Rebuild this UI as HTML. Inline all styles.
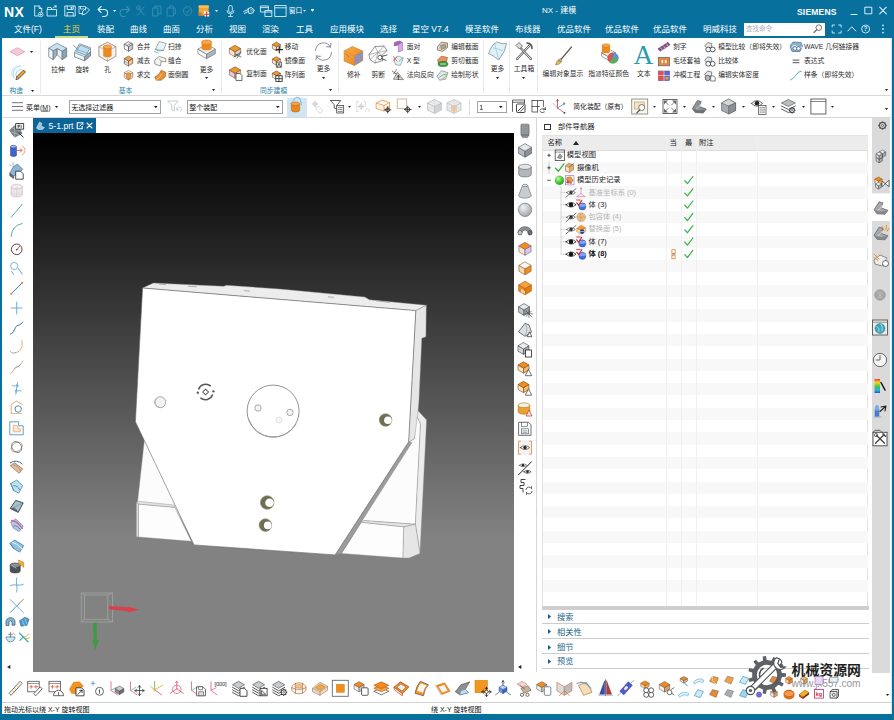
<!DOCTYPE html><html><head><meta charset="utf-8"><title>NX</title><style>
*{margin:0;padding:0;box-sizing:border-box}
html,body{width:894px;height:720px;overflow:hidden;background:#fff}
body{font-family:"Liberation Sans","Noto Sans CJK SC",sans-serif;font-size:8px;color:#222;position:relative}
.a{position:absolute;white-space:nowrap;line-height:1}
.t{position:absolute;white-space:nowrap;line-height:1;transform:translateY(-50%)}
.w{color:#fff}
svg{position:absolute;overflow:visible}
</style></head><body><div class="a" style="left:0px;top:0px;width:894px;height:38px;background:#08709c;"></div>
<div class="a" style="left:0px;top:38px;width:2px;height:682px;background:#08709c;"></div>
<div class="a" style="left:892px;top:38px;width:2px;height:682px;background:#08709c;"></div>
<div class="a" style="left:890.8px;top:38px;width:1.2px;height:676px;background:#cfe6f5;"></div>
<div class="a" style="left:0px;top:714px;width:894px;height:6px;background:#08709c;"></div>
<div class="t" style="left:4px;top:11.5px;font-size:14px;color:#fff;font-weight:bold;letter-spacing:0.5px">NX</div>
<div class="t" style="left:542px;top:11px;font-size:8px;color:#fff;">NX - 建模</div>
<div class="t" style="left:797px;top:11.5px;font-size:8.5px;color:#fff;font-weight:bold;letter-spacing:0.2px">SIEMENS</div>
<div class="t" style="left:14px;top:29px;font-size:8.5px;color:#fff;">文件(F)</div>
<div class="t" style="left:63px;top:29px;font-size:8.5px;color:#f0d24a;">主页</div>
<div class="t" style="left:97px;top:29px;font-size:8.5px;color:#fff;">装配</div>
<div class="t" style="left:130px;top:29px;font-size:8.5px;color:#fff;">曲线</div>
<div class="t" style="left:163px;top:29px;font-size:8.5px;color:#fff;">曲面</div>
<div class="t" style="left:196px;top:29px;font-size:8.5px;color:#fff;">分析</div>
<div class="t" style="left:229px;top:29px;font-size:8.5px;color:#fff;">视图</div>
<div class="t" style="left:262px;top:29px;font-size:8.5px;color:#fff;">渲染</div>
<div class="t" style="left:296px;top:29px;font-size:8.5px;color:#fff;">工具</div>
<div class="t" style="left:330px;top:29px;font-size:8.5px;color:#fff;">应用模块</div>
<div class="t" style="left:380px;top:29px;font-size:8.5px;color:#fff;">选择</div>
<div class="t" style="left:412px;top:29px;font-size:8.5px;color:#fff;">星空 V7.4</div>
<div class="t" style="left:465px;top:29px;font-size:8.5px;color:#fff;">模圣软件</div>
<div class="t" style="left:515px;top:29px;font-size:8.5px;color:#fff;">布线器</div>
<div class="t" style="left:557px;top:29px;font-size:8.5px;color:#fff;">优品软件</div>
<div class="t" style="left:605px;top:29px;font-size:8.5px;color:#fff;">优品软件</div>
<div class="t" style="left:653px;top:29px;font-size:8.5px;color:#fff;">优品软件</div>
<div class="t" style="left:703px;top:29px;font-size:8.5px;color:#fff;">明威科技</div>
<div class="a" style="left:55px;top:36px;width:33px;height:2px;background:#c9d98a;"></div>
<div class="a" style="left:743.5px;top:22.5px;width:81px;height:13px;background:#fff;"></div>
<div class="t" style="left:746px;top:29px;font-size:6.5px;color:#aab;">查找命令</div>
<div class="a" style="left:2px;top:38px;width:888.5px;height:57.5px;background:#fff;"></div>
<div class="a" style="left:2px;top:95px;width:888.5px;height:1px;background:#d8d8d8;"></div>
<div class="a" style="left:2px;top:96px;width:888.5px;height:21px;background:#fff;"></div>
<div class="a" style="left:2px;top:117px;width:888.5px;height:1px;background:#d8d8d8;"></div>
<div class="t" style="left:9.4px;top:91px;font-size:6.8px;color:#2a7fa3;">构造</div>
<svg width="3.2" height="1.92" viewBox="0 0 10 6" style="left:31.4px;top:89.54px"><path d="M0 0H10L5 6Z" fill="#222"/></svg>
<svg width="3.2" height="1.92" viewBox="0 0 10 6" style="left:29.9px;top:50.54px"><path d="M0 0H10L5 6Z" fill="#222"/></svg>
<div class="a" style="left:40px;top:41px;width:1px;height:52px;background:#e9e9e9;"></div>
<div class="t" style="left:58px;top:69.6px;font-size:6.8px;color:#2b2b2b;transform:translate(-50%,-50%)">拉伸</div>
<div class="t" style="left:82.3px;top:69.6px;font-size:6.8px;color:#2b2b2b;transform:translate(-50%,-50%)">旋转</div>
<div class="t" style="left:107.6px;top:69.6px;font-size:6.8px;color:#2b2b2b;transform:translate(-50%,-50%)">孔</div>
<div class="t" style="left:136.8px;top:47.2px;font-size:6.8px;color:#2b2b2b;">合并</div>
<div class="t" style="left:168px;top:47.2px;font-size:6.8px;color:#2b2b2b;">扫掠</div>
<div class="t" style="left:136.8px;top:61.4px;font-size:6.8px;color:#2b2b2b;">减去</div>
<div class="t" style="left:168px;top:61.4px;font-size:6.8px;color:#2b2b2b;">缝合</div>
<div class="t" style="left:136.8px;top:75px;font-size:6.8px;color:#2b2b2b;">求交</div>
<div class="t" style="left:168px;top:75px;font-size:6.8px;color:#2b2b2b;">面倒圆</div>
<div class="t" style="left:206.6px;top:69.5px;font-size:6.8px;color:#2b2b2b;transform:translate(-50%,-50%)">更多</div>
<svg width="3.2" height="1.92" viewBox="0 0 10 6" style="left:205.0px;top:77.04px"><path d="M0 0H10L5 6Z" fill="#222"/></svg>
<div class="t" style="left:118.7px;top:90.7px;font-size:6.8px;color:#2a7fa3;">基本</div>
<svg width="3.2" height="1.92" viewBox="0 0 10 6" style="left:212.4px;top:89.34px"><path d="M0 0H10L5 6Z" fill="#222"/></svg>
<div class="a" style="left:220.5px;top:41px;width:1px;height:52px;background:#e9e9e9;"></div>
<div class="t" style="left:246.3px;top:52px;font-size:6.8px;color:#2b2b2b;">优化面</div>
<div class="t" style="left:246.3px;top:73.9px;font-size:6.8px;color:#2b2b2b;">复制面</div>
<div class="t" style="left:284.7px;top:47.2px;font-size:6.8px;color:#2b2b2b;">移动</div>
<div class="t" style="left:284.7px;top:61.4px;font-size:6.8px;color:#2b2b2b;">镜像面</div>
<div class="t" style="left:284.7px;top:75px;font-size:6.8px;color:#2b2b2b;">阵列面</div>
<div class="t" style="left:323.5px;top:68.8px;font-size:6.8px;color:#2b2b2b;transform:translate(-50%,-50%)">更多</div>
<svg width="3.2" height="1.92" viewBox="0 0 10 6" style="left:321.9px;top:76.84px"><path d="M0 0H10L5 6Z" fill="#222"/></svg>
<div class="t" style="left:260px;top:90.7px;font-size:6.8px;color:#2a7fa3;">同步建模</div>
<svg width="3.2" height="1.92" viewBox="0 0 10 6" style="left:328.7px;top:89.34px"><path d="M0 0H10L5 6Z" fill="#222"/></svg>
<div class="a" style="left:337.5px;top:41px;width:1px;height:52px;background:#e9e9e9;"></div>
<div class="t" style="left:353.8px;top:74.6px;font-size:6.8px;color:#2b2b2b;transform:translate(-50%,-50%)">修补</div>
<div class="t" style="left:378.2px;top:74.6px;font-size:6.8px;color:#2b2b2b;transform:translate(-50%,-50%)">剪断</div>
<div class="t" style="left:406.7px;top:47.2px;font-size:6.8px;color:#2b2b2b;">面对</div>
<div class="t" style="left:451.3px;top:47.2px;font-size:6.8px;color:#2b2b2b;">编辑截面</div>
<div class="t" style="left:406.7px;top:61.4px;font-size:6.8px;color:#2b2b2b;">X 型</div>
<div class="t" style="left:451.3px;top:61.4px;font-size:6.8px;color:#2b2b2b;">剪切截面</div>
<div class="t" style="left:406.7px;top:75px;font-size:6.8px;color:#2b2b2b;">法向反向</div>
<div class="t" style="left:451.3px;top:75px;font-size:6.8px;color:#2b2b2b;">绘制形状</div>
<div class="a" style="left:482.5px;top:41px;width:1px;height:52px;background:#e9e9e9;"></div>
<div class="t" style="left:497.6px;top:68.8px;font-size:6.8px;color:#2b2b2b;transform:translate(-50%,-50%)">更多</div>
<svg width="3.2" height="1.92" viewBox="0 0 10 6" style="left:496.0px;top:76.84px"><path d="M0 0H10L5 6Z" fill="#222"/></svg>
<div class="a" style="left:509px;top:41px;width:1px;height:52px;background:#e9e9e9;"></div>
<div class="t" style="left:524px;top:68.8px;font-size:6.8px;color:#2b2b2b;transform:translate(-50%,-50%)">工具箱</div>
<svg width="3.2" height="1.92" viewBox="0 0 10 6" style="left:522.4px;top:76.84px"><path d="M0 0H10L5 6Z" fill="#222"/></svg>
<div class="a" style="left:537px;top:41px;width:1px;height:52px;background:#e9e9e9;"></div>
<div class="t" style="left:563px;top:74px;font-size:6.8px;color:#2b2b2b;transform:translate(-50%,-50%)">编辑对象显示</div>
<div class="t" style="left:608.6px;top:74px;font-size:6.8px;color:#2b2b2b;transform:translate(-50%,-50%)">指派特征颜色</div>
<div class="t" style="left:643.8px;top:74px;font-size:6.8px;color:#2b2b2b;transform:translate(-50%,-50%)">文本</div>
<div class="t" style="left:673px;top:47.2px;font-size:6.8px;color:#2b2b2b;">刻字</div>
<div class="t" style="left:718.2px;top:47.2px;font-size:6.8px;color:#2b2b2b;">模型比较（即将失效）</div>
<div class="t" style="left:804px;top:47.2px;font-size:6.8px;color:#2b2b2b;">WAVE 几何链接器</div>
<div class="t" style="left:673px;top:61.4px;font-size:6.8px;color:#2b2b2b;">毛坯套袖</div>
<div class="t" style="left:718.2px;top:61.4px;font-size:6.8px;color:#2b2b2b;">比较体</div>
<div class="t" style="left:804px;top:61.4px;font-size:6.8px;color:#2b2b2b;">表达式</div>
<div class="t" style="left:673px;top:75.4px;font-size:6.8px;color:#2b2b2b;">冲模工程</div>
<div class="t" style="left:718.2px;top:75.4px;font-size:6.8px;color:#2b2b2b;">编辑实体密度</div>
<div class="t" style="left:804px;top:75.4px;font-size:6.8px;color:#2b2b2b;">样条（即将失效）</div>
<svg width="3.2" height="1.92" viewBox="0 0 10 6" style="left:885.4px;top:89.34px"><path d="M0 0H10L5 6Z" fill="#222"/></svg>
<svg width="3.2" height="1.92" viewBox="0 0 10 6" style="left:885.4px;top:107.54px"><path d="M0 0H10L5 6Z" fill="#222"/></svg>
<div class="t" style="left:643.5px;top:54.5px;font-size:27.5px;color:#2a9bb0;font-family:'Liberation Serif',serif;transform:translate(-50%,-50%)">A</div>
<svg width="11" height="9" viewBox="0 0 11 9" style="left:11.5px;top:102px"><path d="M0 0.7H11M0 4.5H11M0 8.3H11" stroke="#666" stroke-width="0.9" fill="none"/></svg>
<div class="t" style="left:26px;top:106.6px;font-size:7px;color:#222;">菜单(<u>M</u>)</div>
<svg width="3.2" height="1.92" viewBox="0 0 10 6" style="left:54.9px;top:105.84px"><path d="M0 0H10L5 6Z" fill="#222"/></svg>
<div class="a" style="left:68.8px;top:100.2px;width:92.5px;height:13.6px;background:#fff;border:1px solid #9ea3a8"></div>
<div class="t" style="left:71.3px;top:107.2px;font-size:7px;color:#111;">无选择过滤器</div>
<svg width="3.6" height="2.16" viewBox="0 0 10 6" style="left:153.5px;top:106.22px"><path d="M0 0H10L5 6Z" fill="#222"/></svg>
<div class="a" style="left:186.8px;top:100.2px;width:96.5px;height:13.6px;background:#fff;border:1px solid #9ea3a8"></div>
<div class="t" style="left:189.3px;top:107.2px;font-size:7px;color:#111;">整个装配</div>
<svg width="3.6" height="2.16" viewBox="0 0 10 6" style="left:275.5px;top:106.22px"><path d="M0 0H10L5 6Z" fill="#222"/></svg>
<div class="a" style="left:476.8px;top:100.6px;width:30px;height:12.8px;background:#fff;border:1px solid #9ea3a8"></div>
<div class="t" style="left:479.3px;top:107.2px;font-size:7px;color:#111;">1</div>
<svg width="3.6" height="2.16" viewBox="0 0 10 6" style="left:499.0px;top:106.22px"><path d="M0 0H10L5 6Z" fill="#222"/></svg>
<div class="a" style="left:287.2px;top:97.6px;width:19.4px;height:19px;background:#cfe6f5;"></div>
<div class="t" style="left:573.3px;top:106.8px;font-size:6.8px;color:#222;">简化装配（原有）</div>
<div class="a" style="left:468.5px;top:99px;width:1px;height:16px;background:#ddd;"></div>
<svg width="3" height="1.7999999999999998" viewBox="0 0 10 6" style="left:347.5px;top:106.1px"><path d="M0 0H10L5 6Z" fill="#222"/></svg>
<svg width="3" height="1.7999999999999998" viewBox="0 0 10 6" style="left:417.7px;top:106.1px"><path d="M0 0H10L5 6Z" fill="#222"/></svg>
<svg width="3" height="1.7999999999999998" viewBox="0 0 10 6" style="left:652.8px;top:106.1px"><path d="M0 0H10L5 6Z" fill="#222"/></svg>
<svg width="3" height="1.7999999999999998" viewBox="0 0 10 6" style="left:683.4px;top:106.1px"><path d="M0 0H10L5 6Z" fill="#222"/></svg>
<svg width="3" height="1.7999999999999998" viewBox="0 0 10 6" style="left:711.9px;top:106.1px"><path d="M0 0H10L5 6Z" fill="#222"/></svg>
<svg width="3" height="1.7999999999999998" viewBox="0 0 10 6" style="left:742.0px;top:106.1px"><path d="M0 0H10L5 6Z" fill="#222"/></svg>
<svg width="3" height="1.7999999999999998" viewBox="0 0 10 6" style="left:771.5px;top:106.1px"><path d="M0 0H10L5 6Z" fill="#222"/></svg>
<svg width="3" height="1.7999999999999998" viewBox="0 0 10 6" style="left:801.5px;top:106.1px"><path d="M0 0H10L5 6Z" fill="#222"/></svg>
<svg width="3" height="1.7999999999999998" viewBox="0 0 10 6" style="left:830.5px;top:106.1px"><path d="M0 0H10L5 6Z" fill="#222"/></svg>
<div class="a" style="left:33px;top:133px;width:481px;height:538.6px;background:linear-gradient(#000 0%,#000 1%,#828282 75%,#828282 100%);"></div>
<svg width="894" height="720" viewBox="0 0 894 720" style="left:0;top:0"><polygon points="144.4,440 137.5,503 174.2,506.5 186.8,530 160,470" fill="#fcfcfc" stroke="#999" stroke-width="0.4" stroke-linejoin="round" /><polygon points="136.3,502.5 139,501.3 174,505 175,507.5 138.5,504.2" fill="#e2e2e2" stroke="#888" stroke-width="0.4" stroke-linejoin="round" /><polygon points="136.3,502.5 138.5,504.2 138.5,537 136.3,536.8" fill="#dcdcdc" stroke="#888" stroke-width="0.4" stroke-linejoin="round" /><polygon points="138.5,504.2 175,507.5 191.3,541.3 138.5,537" fill="#fdfdfd" stroke="#888" stroke-width="0.4" stroke-linejoin="round" /><polygon points="408.6,441.9 414.5,438.8 416,414 420.5,424 415.4,524.2 364,520.6 350,540" fill="#fcfcfc" stroke="#999" stroke-width="0.4" stroke-linejoin="round" /><polygon points="416,414 418.1,410.8 426.6,419.9 420,553.4 415.4,524.2 420.5,424" fill="#ececec" stroke="#888" stroke-width="0.4" stroke-linejoin="round" /><polygon points="361.3,522.4 364,520.6 415.4,524.2 403.7,526.9" fill="#e4e4e4" stroke="#888" stroke-width="0.4" stroke-linejoin="round" /><polygon points="403.7,526.9 415.4,524.2 420,553.4 409.1,558.1 402.8,558.1" fill="#e6e6e6" stroke="#888" stroke-width="0.4" stroke-linejoin="round" /><polygon points="361.3,522.4 403.7,526.9 402.8,558.1 341.4,553.4" fill="#fdfdfd" stroke="#888" stroke-width="0.4" stroke-linejoin="round" /><polygon points="142.6,288 153.4,283 223.8,286.3 226.5,285.3 280,289 364.9,297.1 369.4,299.8 426.3,305.2 415.8,310.6" fill="#ededed" stroke="#888" stroke-width="0.4" stroke-linejoin="round" /><polygon points="415.8,310.6 426.3,305.2 425.9,336.8 421.8,338.3 419,400 418.1,410.8 414.5,438.8 408.6,441.9" fill="#e6e6e6" stroke="#888" stroke-width="0.4" stroke-linejoin="round" /><polygon points="408.6,441.9 412,442.5 341.4,553.4 335.1,554.9" fill="#9c9c9c" stroke="#777" stroke-width="0.3" stroke-linejoin="round" /><path d="M159 284.2 L166 284.6 M188 286.2 L197 286.8 M244 290.6 L250 291.1 M328 296.8 L334 297.4 M376 300.8 L390 302.4" stroke="#a8a8a8" stroke-width="0.9" fill="none"/><polygon points="142.6,288 415.8,310.6 408.6,441.9 335.1,554.9 194,544.9 135.4,421.7" fill="#ffffff" stroke="#666" stroke-width="0.6" stroke-linejoin="round" /><circle cx="273.1" cy="411.1" r="26" fill="#fff" stroke="#666" stroke-width="0.7"/><path d="M249 420 A26 26 0 0 0 296 424" fill="none" stroke="#999" stroke-width="1"/><circle cx="258" cy="408" r="3.2" fill="#f4f4f4" stroke="#777" stroke-width="0.6"/><circle cx="290" cy="412.4" r="3.2" fill="#f4f4f4" stroke="#777" stroke-width="0.6"/><circle cx="278.9" cy="420" r="3" fill="#f6f6f6" stroke="#ccc" stroke-width="0.5"/><circle cx="160.2" cy="402.2" r="5.5" fill="#f2f2f2" stroke="#777" stroke-width="0.6"/><path d="M157.2 398.2 A5 5 0 0 0 159.2 407.2" fill="none" stroke="#aaa" stroke-width="0.8"/><circle cx="385.6" cy="420" r="6.3" fill="#6e6e55" stroke="#8a8a6a" stroke-width="0.6"/><circle cx="387.90000000000003" cy="420.3" r="3.8" fill="#fff"/><circle cx="267.2" cy="502.5" r="6.8" fill="#6e6e55" stroke="#8a8a6a" stroke-width="0.6"/><circle cx="269.5" cy="502.8" r="4.3" fill="#fff"/><circle cx="265.4" cy="525.1" r="6.3" fill="#6e6e55" stroke="#8a8a6a" stroke-width="0.6"/><circle cx="267.7" cy="525.4" r="3.8" fill="#fff"/><g transform="translate(205.6,392) scale(1.3)" fill="none" stroke="#555" stroke-width="1.1"><path d="M-5.5 -2 A6 6 0 0 1 4 -4.5"/><path d="M5.5 2 A6 6 0 0 1 -4 4.5"/><path d="M-2.2 0 L0 -2.2 L2.2 0 L0 2.2 Z" stroke-width="0.8"/><circle cx="-6" cy="0.5" r="0.9" fill="#555" stroke="none"/><circle cx="6" cy="-0.5" r="0.9" fill="#555" stroke="none"/></g><g fill="none" stroke="#aeb4b0" stroke-width="0.7" opacity="0.85"><path d="M81.3 593 H112.6 V622 H81.3 Z"/><path d="M84.4 595 H107.8 V619.4 H84.4 Z"/><path d="M81.3 593 L84.4 595 M112.6 593 L107.8 595 M112.6 622 L107.8 619.4 M81.3 622 L84.4 619.4"/></g><path d="M108.9 606.1 L128 607.2 L128 606.4 L139.4 609.8 L128 612.4 L128 611.2 L108.9 609.3 Z" fill="#d8404e"/><path d="M92.9 622.8 L96.7 622.8 L97 640 L99 639.5 L95.3 650 L92.3 640 L93.8 640.3 Z" fill="#3f9a48"/></svg>
<div class="a" style="left:32.7px;top:118px;width:63.3px;height:15.2px;background:#0c6398;"></div>
<div class="t" style="left:48.6px;top:125.6px;font-size:8.6px;color:#fff;">5-1.prt</div>
<div class="a" style="left:535.6px;top:118px;width:1px;height:554px;background:#d6d6d6;"></div>
<div class="a" style="left:543.8px;top:123.8px;width:6.8px;height:6.6px;border:1px solid #333"></div>
<div class="t" style="left:558px;top:127.2px;font-size:7.3px;color:#222;">部件导航器</div>
<div class="a" style="left:542.4px;top:135.4px;width:326px;height:470.6px;background:#fff;border:1px solid #e3e3e3;border-bottom:none"></div>
<div class="a" style="left:543px;top:161.8px;width:325px;height:12.3px;background:#f8f8f8;"></div>
<div class="a" style="left:543px;top:186.4px;width:325px;height:12.3px;background:#f8f8f8;"></div>
<div class="a" style="left:543px;top:211.0px;width:325px;height:12.3px;background:#f8f8f8;"></div>
<div class="a" style="left:543px;top:235.60000000000002px;width:325px;height:12.3px;background:#f8f8f8;"></div>
<div class="a" style="left:543px;top:260.2px;width:325px;height:12.3px;background:#f8f8f8;"></div>
<div class="a" style="left:543px;top:284.8px;width:325px;height:12.3px;background:#f8f8f8;"></div>
<div class="a" style="left:543px;top:309.4px;width:325px;height:12.3px;background:#f8f8f8;"></div>
<div class="a" style="left:543px;top:334.0px;width:325px;height:12.3px;background:#f8f8f8;"></div>
<div class="a" style="left:543px;top:358.6px;width:325px;height:12.3px;background:#f8f8f8;"></div>
<div class="a" style="left:543px;top:383.20000000000005px;width:325px;height:12.3px;background:#f8f8f8;"></div>
<div class="a" style="left:543px;top:407.8px;width:325px;height:12.3px;background:#f8f8f8;"></div>
<div class="a" style="left:543px;top:432.40000000000003px;width:325px;height:12.3px;background:#f8f8f8;"></div>
<div class="a" style="left:543px;top:457.0px;width:325px;height:12.3px;background:#f8f8f8;"></div>
<div class="a" style="left:543px;top:481.6px;width:325px;height:12.3px;background:#f8f8f8;"></div>
<div class="a" style="left:543px;top:506.20000000000005px;width:325px;height:12.3px;background:#f8f8f8;"></div>
<div class="a" style="left:543px;top:530.8px;width:325px;height:12.3px;background:#f8f8f8;"></div>
<div class="a" style="left:543px;top:555.4000000000001px;width:325px;height:12.3px;background:#f8f8f8;"></div>
<div class="a" style="left:543px;top:580.0px;width:325px;height:12.3px;background:#f8f8f8;"></div>
<div class="a" style="left:543px;top:136px;width:325px;height:13.5px;background:#ececec;"></div>
<div class="a" style="left:543px;top:149.5px;width:325px;height:0.8px;background:#dedede;"></div>
<div class="a" style="left:665.6px;top:136px;width:0.8px;height:470px;background:#f0f0f0;"></div>
<div class="a" style="left:681.2px;top:136px;width:0.8px;height:470px;background:#f0f0f0;"></div>
<div class="a" style="left:695.7px;top:136px;width:0.8px;height:470px;background:#f0f0f0;"></div>
<div class="a" style="left:757.2px;top:136px;width:0.8px;height:470px;background:#f0f0f0;"></div>
<div class="t" style="left:547.4px;top:142.9px;font-size:7.3px;color:#222;">名称</div>
<svg width="6" height="4" viewBox="0 0 6 4" style="left:572.8px;top:141px"><path d="M0 4H6L3 0Z" fill="#222"/></svg>
<div class="t" style="left:669.5px;top:142.9px;font-size:7.3px;color:#222;">当</div>
<div class="t" style="left:685px;top:142.9px;font-size:7.3px;color:#222;">最</div>
<div class="t" style="left:699px;top:142.9px;font-size:7.3px;color:#222;">附注</div>
<div class="a" style="left:542.4px;top:606px;width:326.3px;height:3.6px;background:#cfcfcf;"></div>
<div class="t" style="left:566.8px;top:155.3px;font-size:7.3px;color:#222;">模型视图</div>
<div class="t" style="left:576.9px;top:167.8px;font-size:7.3px;color:#222;">摄像机</div>
<div class="t" style="left:576.9px;top:180.3px;font-size:7.3px;color:#222;">模型历史记录</div>
<div class="t" style="left:588.5px;top:192.6px;font-size:7.3px;color:#b4b4b4;">基准坐标系 (0)</div>
<div class="t" style="left:588.5px;top:204.8px;font-size:7.3px;color:#222;">体 (3)</div>
<div class="t" style="left:588.5px;top:217.2px;font-size:7.3px;color:#b4b4b4;">包容体 (4)</div>
<div class="t" style="left:588.5px;top:229.4px;font-size:7.3px;color:#b4b4b4;">替换面 (5)</div>
<div class="t" style="left:588.5px;top:241.8px;font-size:7.3px;color:#222;">体 (7)</div>
<div class="t" style="left:588.5px;top:254.2px;font-size:7.3px;color:#111;font-weight:bold">体 (8)</div>
<div class="t" style="left:557.1px;top:617.8000000000001px;font-size:8.2px;color:#1d6688;">搜索</div>
<svg width="3.2" height="5" viewBox="0 0 4 6" style="left:547.6px;top:614.3000000000001px"><path d="M0 0V6L4 3Z" fill="#1d5f80"/></svg>
<div class="t" style="left:557.1px;top:632.9000000000001px;font-size:8.2px;color:#1d6688;">相关性</div>
<svg width="3.2" height="5" viewBox="0 0 4 6" style="left:547.6px;top:629.4000000000001px"><path d="M0 0V6L4 3Z" fill="#1d5f80"/></svg>
<div class="t" style="left:557.1px;top:648.0px;font-size:8.2px;color:#1d6688;">细节</div>
<svg width="3.2" height="5" viewBox="0 0 4 6" style="left:547.6px;top:644.5px"><path d="M0 0V6L4 3Z" fill="#1d5f80"/></svg>
<div class="t" style="left:557.1px;top:662.1px;font-size:8.2px;color:#1d6688;">预览</div>
<svg width="3.2" height="5" viewBox="0 0 4 6" style="left:547.6px;top:658.6px"><path d="M0 0V6L4 3Z" fill="#1d5f80"/></svg>
<div class="a" style="left:542.4px;top:623.2px;width:326.3px;height:0.9px;background:#cdcdcd;"></div>
<div class="a" style="left:542.4px;top:638.3px;width:326.3px;height:0.9px;background:#cdcdcd;"></div>
<div class="a" style="left:542.4px;top:653px;width:326.3px;height:0.9px;background:#cdcdcd;"></div>
<div class="a" style="left:542.4px;top:667.9px;width:326.3px;height:0.9px;background:#cdcdcd;"></div>
<div class="a" style="left:872px;top:117.5px;width:18.4px;height:555px;background:#dadada;"></div>
<div class="a" style="left:2px;top:702px;width:888.5px;height:1px;background:#d0d0d0;"></div>
<div class="t" style="left:4px;top:708.5px;font-size:7px;color:#111;">拖动光标以绕 X-Y 旋转视图</div>
<div class="t" style="left:431px;top:708.5px;font-size:7px;color:#111;">绕 X-Y 旋转视图</div>
<svg width="3.2" height="1.92" viewBox="0 0 10 6" style="left:112.9px;top:10.04px"><path d="M0 0H10L5 6Z" fill="#e8f4fa"/></svg>
<svg width="3.2" height="1.92" viewBox="0 0 10 6" style="left:214.6px;top:10.04px"><path d="M0 0H10L5 6Z" fill="#e8f4fa"/></svg>
<div class="t" style="left:288.7px;top:11.3px;font-size:6.8px;color:#fff;">窗口</div>
<svg width="3" height="1.7999999999999998" viewBox="0 0 10 6" style="left:303.3px;top:10.1px"><path d="M0 0H10L5 6Z" fill="#e8f4fa"/></svg>
<svg width="3" height="1.7999999999999998" viewBox="0 0 10 6" style="left:311.0px;top:10.4px"><path d="M0 0H10L5 6Z" fill="#e8f4fa"/></svg>
<div class="a" style="left:311px;top:9px;width:3px;height:0.8px;background:#e8f4fa;"></div>
<svg width="4" height="4" viewBox="0 0 6 6" style="left:6.5px;top:665px"><path d="M5 0V6L0 3Z" fill="#222"/></svg>
<svg width="4" height="4" viewBox="0 0 6 6" style="left:518.2px;top:665px"><path d="M5 0V6L0 3Z" fill="#222"/></svg>
<svg width="3.2" height="1.92" viewBox="0 0 10 6" style="left:885.9px;top:694.3399999999999px"><path d="M0 0H10L5 6Z" fill="#222"/></svg>
<div class="t" style="left:791.5px;top:671.3px;font-size:13.9px;color:#1e1e1e;font-weight:bold;font-family:"Liberation Sans","Noto Sans CJK SC",sans-serif;letter-spacing:-0.1px">机械资源网</div>
<div class="t" style="left:791.5px;top:684px;font-size:10.2px;color:rgba(120,120,125,0.8);letter-spacing:-0.15px">www.jx557.com</div>
<svg width="894" height="720" viewBox="0 0 894 720" style="left:0;top:0"><g transform="translate(38.2,11)" ><path d="M-3.5 -5 H1 L3.5 -2.5 V1 M-3.5 -5 V5 H0 M1 -5 V-2.5 H3.5" fill="none" stroke="#d8eef8" stroke-width="0.9" stroke-linecap="round" stroke-linejoin="round" /><circle cx="2.5" cy="3.5" r="2.3" fill="none" stroke="#d8eef8" stroke-width="0.8"/><path d="M2.5 2.3V4.7M1.3 3.5H3.7" fill="none" stroke="#d8eef8" stroke-width="0.7" stroke-linecap="round" stroke-linejoin="round" /></g><g transform="translate(52,11.5)" ><path d="M-4.5 -2 H4.5 V4.5 H-4.5 Z M-4.5 -2 V-4 H-1 L0 -2" fill="none" stroke="#d8eef8" stroke-width="0.9" stroke-linecap="round" stroke-linejoin="round" /><path d="M1 -3.5 L4 -5.5 M4 -5.5 H2.2 M4 -5.5 V-3.8" fill="none" stroke="#d8eef8" stroke-width="0.8" stroke-linecap="round" stroke-linejoin="round" /></g><g transform="translate(70.2,11)" ><path d="M-5 -5 H5 V5 H-5 Z M-3 -5 V-1.5 H3 V-5 M-3 5 V1.5 H3 V5" fill="none" stroke="#d8eef8" stroke-width="0.9" stroke-linecap="round" stroke-linejoin="round" /><rect x="0.5" y="-4.2" width="1.5" height="2" rx="0" fill="#d8eef8" stroke="none" stroke-width="0.6"/></g><g transform="translate(84,11)" ><path d="M-5 -4.5 H1.5 V-1 M-5 -4.5 V2.5 H-1.5 M-3.5 -4.5 V-2 H0" fill="none" stroke="#d8eef8" stroke-width="0.8" stroke-linecap="round" stroke-linejoin="round" /><path d="M-1 0 L3 -3.5 L5.5 -1 L1.5 3 L-1.5 3.8 Z" fill="none" stroke="#d8eef8" stroke-width="0.9" stroke-linecap="round" stroke-linejoin="round" /></g><g transform="translate(102.6,11)" ><path d="M-4.5 -1.5 H1.5 A3.5 3.5 0 0 1 1.5 5.5 H0 M-4.5 -1.5 L-1.5 -4.5 M-4.5 -1.5 L-1.5 1.5" fill="none" stroke="#d8eef8" stroke-width="1.1" stroke-linecap="round" stroke-linejoin="round" /></g><g transform="translate(125,11)" ><path d="M4.5 -1.5 H-1.5 A3.5 3.5 0 0 0 -1.5 5.5 H0 M4.5 -1.5 L1.5 -4.5 M4.5 -1.5 L1.5 1.5" fill="none" stroke="#3a8fb4" stroke-width="1.1" stroke-linecap="round" stroke-linejoin="round" /></g><g transform="translate(141,11)" ><path d="M-3 -4 L3 4 M3 -4 L-3 4 M-4 -2 A2 2 0 1 1 -3.9 -1.9" fill="none" stroke="#3a8fb4" stroke-width="0.9" stroke-linecap="round" stroke-linejoin="round" /></g><g transform="translate(157,11)" ><path d="M-4 -3 H1 V5 H-4 Z M-2 -3 V-5 H4 V3 H1" fill="none" stroke="#3a8fb4" stroke-width="0.9" stroke-linecap="round" stroke-linejoin="round" /></g><g transform="translate(171.5,11)" ><path d="M-4 -3 H2 V5 H-4 Z M-2 -3 V-5 H1 L4 -2 V3 H2" fill="none" stroke="#3a8fb4" stroke-width="0.9" stroke-linecap="round" stroke-linejoin="round" /></g><g transform="translate(187.6,11)" ><circle cx="0" cy="0" r="4.3" fill="none" stroke="#3a8fb4" stroke-width="0.9"/><path d="M-2 0.5 L-0.3 2 L2.2 -1.8" fill="none" stroke="#3a8fb4" stroke-width="0.9" stroke-linecap="round" stroke-linejoin="round" /></g><g transform="translate(203.7,11)" ><rect x="-5" y="-5.5" width="10" height="10" rx="0" fill="#f3a73a" stroke="none" stroke-width="0.6"/><rect x="-5" y="-5.5" width="10" height="2.2" rx="0" fill="#f7c35e" stroke="none" stroke-width="0.6"/><polygon points="0,0 5.5,1 5.5,5.5 1,5.5" fill="#fff" stroke="none" stroke-width="0.6" stroke-linejoin="round"/><path d="M3 1 V5.5 M1 3.2 H5.5" fill="none" stroke="#c8343c" stroke-width="1.1" stroke-linecap="round" stroke-linejoin="round" /><rect x="-5" y="1.5" width="3" height="3" rx="0" fill="#e2742a" stroke="none" stroke-width="0.6"/></g><g transform="translate(230.5,11)" ><rect x="-1.8" y="-5.5" width="3.6" height="7" rx="1.8" fill="none" stroke="#d8eef8" stroke-width="0.9"/><path d="M-3.5 -0.5 A3.5 3.5 0 0 0 3.5 -0.5 M0 3 V5.3 M-2 5.5 H2" fill="none" stroke="#d8eef8" stroke-width="0.8" stroke-linecap="round" stroke-linejoin="round" /></g><g transform="translate(249.3,11)" ><path d="M-5.5 0.5 L-1 -1.5 M-1 -2.5 L2 -3.5 L5 -1 L3.5 2 L0 2.5 Z M-5 2.5 L-1 0.5" fill="none" stroke="#d8eef8" stroke-width="1.0" stroke-linecap="round" stroke-linejoin="round" /><circle cx="2.3" cy="-0.6" r="1" fill="none" stroke="#d8eef8" stroke-width="0.6"/></g><g transform="translate(266.3,11)" ><path d="M-5.5 -5 H2 V1 H-5.5 Z M-5.5 -3.4 H2" fill="none" stroke="#d8eef8" stroke-width="0.9" stroke-linecap="round" stroke-linejoin="round" /><path d="M-1 -0.5 H5.5 V5.5 H-1 Z M-1 1 H5.5" fill="#08709c" stroke="#d8eef8" stroke-width="0.9" stroke-linecap="round" stroke-linejoin="round" /></g><g transform="translate(280.6,11)" ><path d="M-5.5 -5.5 H5.5 V5.5 H-5.5 Z M-5.5 -3.2 H5.5" fill="none" stroke="#d8eef8" stroke-width="0.9" stroke-linecap="round" stroke-linejoin="round" /></g><g transform="translate(854,11)" ><path d="M-3 3.5 H3" fill="none" stroke="#d8eef8" stroke-width="1.1" stroke-linecap="round" stroke-linejoin="round" /></g><g transform="translate(868.5,10.5)" ><path d="M-3.3 -3.3 H3.3 V3.3 H-3.3 Z" fill="none" stroke="#d8eef8" stroke-width="1.0" stroke-linecap="round" stroke-linejoin="round" /></g><g transform="translate(883,10.5)" ><path d="M-3.3 -3.3 L3.3 3.3 M3.3 -3.3 L-3.3 3.3" fill="none" stroke="#d8eef8" stroke-width="1.1" stroke-linecap="round" stroke-linejoin="round" /></g><g transform="translate(818,28.5)" ><circle cx="0.8" cy="-0.8" r="2.8" fill="none" stroke="#666" stroke-width="0.9"/><path d="M-1.2 1.2 L-4 4" fill="none" stroke="#666" stroke-width="1.1" stroke-linecap="round" stroke-linejoin="round" /></g><g transform="translate(836.7,29)" ><path d="M-4.5 -2 V-4 H-2 M2 -4 H4.5 V-2 M4.5 2 V4 H2 M-2 4 H-4.5 V2" fill="none" stroke="#d8eef8" stroke-width="0.9" stroke-linecap="round" stroke-linejoin="round" /></g><g transform="translate(851.8,29)" ><path d="M-4 2 L0 -2.2 L4 2" fill="none" stroke="#d8eef8" stroke-width="1.0" stroke-linecap="round" stroke-linejoin="round" /></g><g transform="translate(865.6,29)" ><circle cx="0" cy="0" r="4" fill="none" stroke="#d8eef8" stroke-width="0.9"/><text x="0" y="2.4" font-size="6.5" font-weight="bold" text-anchor="middle" fill="#d8eef8" font-family="Liberation Sans,sans-serif">?</text></g><g transform="translate(883,29)" ><circle cx="0" cy="-3.6" r="0.9" fill="#d8eef8" stroke="none" stroke-width="0.6"/><circle cx="0" cy="0" r="0.9" fill="#d8eef8" stroke="none" stroke-width="0.6"/><circle cx="0" cy="3.6" r="0.9" fill="#d8eef8" stroke="none" stroke-width="0.6"/></g><g transform="translate(17.4,51.7)" ><polygon points="-7.4,0 0,-4 7.4,0 0,4" fill="#f6c9da" stroke="#d993b0" stroke-width="0.7" stroke-linejoin="round"/></g><g transform="translate(18,73)" ><path d="M-4 5 A8 8 0 0 1 3 -7" fill="none" stroke="#8cc4e6" stroke-width="0.8" stroke-linecap="round" stroke-linejoin="round" /><path d="M-1.5 4 A5 5 0 0 1 3.5 -3.5" fill="none" stroke="#8cc4e6" stroke-width="0.8" stroke-linecap="round" stroke-linejoin="round" /><path d="M-6.5 3 A10 10 0 0 1 -1 -8" fill="none" stroke="#b8dcf0" stroke-width="0.7" stroke-linecap="round" stroke-linejoin="round" /><polygon points="-2,6.5 -1,3.5 5.5,-3 7.5,-1 1,5.5" fill="#f0a033" stroke="#3a2a18" stroke-width="0.7" stroke-linejoin="round"/><polygon points="-2,6.5 -1,3.5 1,5.5" fill="#f6deb5" stroke="#3a2a18" stroke-width="0.5" stroke-linejoin="round"/></g><g transform="translate(57.7,51.7)" ><polygon points="-9,-3.5 -4.5,-1 -4.5,8 -9,5" fill="#eef3f5" stroke="#4b6472" stroke-width="0.6" stroke-linejoin="round"/><polygon points="-4.5,-1 -0.5,-3.2 -0.5,3 -4.5,8" fill="#9fb1ba" stroke="#4b6472" stroke-width="0.6" stroke-linejoin="round"/><polygon points="-0.5,-3.2 4.5,-0.5 4.5,8 -0.5,3" fill="#e8eef1" stroke="#4b6472" stroke-width="0.6" stroke-linejoin="round"/><polygon points="4.5,-0.5 9,-3.5 9,5 4.5,8" fill="#8fa4ae" stroke="#4b6472" stroke-width="0.6" stroke-linejoin="round"/><polygon points="-9,-3.5 -1,-8.5 9,-3.5 4.5,-0.5 -0.5,-3.2 -4.5,-1" fill="#c9e2ee" stroke="#4b6472" stroke-width="0.6" stroke-linejoin="round"/></g><g transform="translate(82.5,51.7)" ><polygon points="-8,1 -3,-8 8,-4 8,4 2,9 -8,5" fill="#dfe8ec" stroke="#4b6472" stroke-width="0.6" stroke-linejoin="round"/><polygon points="-6,0 -2.5,-6.5 7,-3 3.5,3.5" fill="#bfe0f0" stroke="#4b6472" stroke-width="0.5" stroke-linejoin="round"/><polygon points="-8,1 2,5 2,9 -8,5" fill="#f3f6f7" stroke="#4b6472" stroke-width="0.5" stroke-linejoin="round"/><polygon points="2,5 8,0 8,4 2,9" fill="#95a8b2" stroke="#4b6472" stroke-width="0.5" stroke-linejoin="round"/><path d="M-5 -2 L5 1.5" fill="none" stroke="#5fa8d0" stroke-width="0.7" stroke-linecap="round" stroke-linejoin="round" /><path d="M-9 -6.5 L-5.5 -3" fill="none" stroke="#4b6472" stroke-width="0.7" stroke-linecap="round" stroke-linejoin="round" /></g><g transform="translate(107.4,51.7)" ><polygon points="-8.5,-5 0,-9.5 8.5,-5 8.5,4.5 0,9.5 -8.5,4.5" fill="#f6f3ef" stroke="#6b5a48" stroke-width="0.6" stroke-linejoin="round"/><path d="M-8.5 -5 L0 -0.5 L8.5 -5 M0 -0.5 V9.5" fill="none" stroke="#9a8a78" stroke-width="0.5" stroke-linecap="round" stroke-linejoin="round" /><path d="M-4.2 -4.8 V3.5 A4.2 2 0 0 0 4.2 3.5 V-4.8Z" fill="#e98a22"/><ellipse cx="0" cy="-4.8" rx="4.2" ry="2" fill="#f7a94a" stroke="#c76a10" stroke-width="0.5" /></g><g transform="translate(128.5,46.5) scale(1.15)" ><polygon points="-3.65,-2.1 0,0.0 0,4.2 -3.65,2.1" fill="#fbfbfb" stroke="#4a4a4a" stroke-width="0.55" stroke-linejoin="round"/><polygon points="0,0.0 3.65,-2.1 3.65,2.1 0,4.2" fill="#c7cdd1" stroke="#4a4a4a" stroke-width="0.55" stroke-linejoin="round"/><polygon points="0,-4.2 3.65,-2.1 0,0.0 -3.65,-2.1" fill="#eef1f3" stroke="#4a4a4a" stroke-width="0.55" stroke-linejoin="round"/><path d="M-1 -1 L2.5 -3" fill="none" stroke="#4a4a4a" stroke-width="0.5" stroke-linecap="round" stroke-linejoin="round" /></g><g transform="translate(128.5,61) scale(1.15)" ><polygon points="-3.65,-2.1 0,0.0 0,4.2 -3.65,2.1" fill="#fff" stroke="#5a4a3a" stroke-width="0.55" stroke-linejoin="round"/><polygon points="0,0.0 3.65,-2.1 3.65,2.1 0,4.2" fill="#f6c48c" stroke="#5a4a3a" stroke-width="0.55" stroke-linejoin="round"/><polygon points="0,-4.2 3.65,-2.1 0,0.0 -3.65,-2.1" fill="#f3a34a" stroke="#5a4a3a" stroke-width="0.55" stroke-linejoin="round"/><polygon points="-3.6,0 0,2 0,4.6 -3.6,2.4" fill="#d7dde0" stroke="#5a4a3a" stroke-width="0.4" stroke-linejoin="round"/></g><g transform="translate(128.5,75.2) scale(1.15)" ><polygon points="-3.65,-2.1 0,0.0 0,4.2 -3.65,2.1" fill="#fff" stroke="#7a6a5a" stroke-width="0.55" stroke-linejoin="round"/><polygon points="0,0.0 3.65,-2.1 3.65,2.1 0,4.2" fill="#f0f0f0" stroke="#7a6a5a" stroke-width="0.55" stroke-linejoin="round"/><polygon points="0,-4.2 3.65,-2.1 0,0.0 -3.65,-2.1" fill="#fff" stroke="#7a6a5a" stroke-width="0.55" stroke-linejoin="round"/><ellipse cx="0" cy="0.5" rx="2.2" ry="2.8" fill="#f19a3c" stroke="#b8651a" stroke-width="0.5" /></g><g transform="translate(160.3,46.5)" ><polygon points="-5,3 -1,-5 6,-3 3,4" fill="#eaf3f8" stroke="#5b7c8c" stroke-width="0.6" stroke-linejoin="round"/><path d="M-5 3 Q-1 6 3 4" fill="none" stroke="#5b7c8c" stroke-width="0.6" stroke-linecap="round" stroke-linejoin="round" /><path d="M-6 5 L-2 6.5" fill="none" stroke="#58b0d8" stroke-width="0.8" stroke-linecap="round" stroke-linejoin="round" /></g><g transform="translate(160.3,61)" ><polygon points="-5.5,-1 -1,-4.5 5.5,-2.5 5.5,1 1,0 0,5 -5.5,3" fill="#f3f3f1" stroke="#5a5a55" stroke-width="0.6" stroke-linejoin="round"/><path d="M-1 -1.5 L1 0" fill="none" stroke="#5a5a55" stroke-width="0.5" stroke-linecap="round" stroke-linejoin="round" /></g><g transform="translate(160.3,75.2)" ><polygon points="-5.5,2 -1.5,-1 1,-5 5.5,-3 5,1.5 1,5 -4,5" fill="#ef922c" stroke="#7a4210" stroke-width="0.5" stroke-linejoin="round"/><path d="M-4 5 Q0 3 1 -1" fill="none" stroke="#fbd19a" stroke-width="0.8" stroke-linecap="round" stroke-linejoin="round" /></g><g transform="translate(206.6,51.4)" ><polygon points="-8.7,-2.25 0,2.75 0,7.25 -8.7,2.25" fill="#fafafa" stroke="#5a646b" stroke-width="0.6" stroke-linejoin="round"/><polygon points="0,2.75 8.7,-2.25 8.7,2.25 0,7.25" fill="#aeb6bb" stroke="#5a646b" stroke-width="0.6" stroke-linejoin="round"/><polygon points="0,-7.25 8.7,-2.25 0,2.75 -8.7,-2.25" fill="#eceff1" stroke="#5a646b" stroke-width="0.6" stroke-linejoin="round"/><path d="M-5 -9 V-3.5 A5 2.4 0 0 0 5 -3.5 V-9Z" fill="#ee8a20"/><ellipse cx="0" cy="-9" rx="5" ry="2.4" fill="#f6a546" stroke="#c76a10" stroke-width="0.5" /></g><g transform="translate(235,51)" ><polygon points="-5.66,-2.5 0,0.75 0,5.75 -5.66,2.5" fill="#fbe9d2" stroke="#6a4a2a" stroke-width="0.55" stroke-linejoin="round"/><polygon points="0,0.75 5.66,-2.5 5.66,2.5 0,5.75" fill="#d8d2cc" stroke="#6a4a2a" stroke-width="0.55" stroke-linejoin="round"/><polygon points="0,-5.75 5.66,-2.5 0,0.75 -5.66,-2.5" fill="#f19628" stroke="#6a4a2a" stroke-width="0.55" stroke-linejoin="round"/><path d="M-1 6 L6 1 M2 7 L5 3 M0 3 L6 6" fill="none" stroke="#444" stroke-width="0.7" stroke-linecap="round" stroke-linejoin="round" /></g><g transform="translate(235,72.5)" ><polygon points="-5.66,-2.5 0,0.75 0,5.75 -5.66,2.5" fill="#e8c9e0" stroke="#6a4a2a" stroke-width="0.55" stroke-linejoin="round"/><polygon points="0,0.75 5.66,-2.5 5.66,2.5 0,5.75" fill="#d8d2cc" stroke="#6a4a2a" stroke-width="0.55" stroke-linejoin="round"/><polygon points="0,-5.75 5.66,-2.5 0,0.75 -5.66,-2.5" fill="#f19628" stroke="#6a4a2a" stroke-width="0.55" stroke-linejoin="round"/><polygon points="1,1 5,1 7,3 7,8 1,8" fill="#fff" stroke="#333" stroke-width="0.7" stroke-linejoin="round"/></g><g transform="translate(276.4,46.5) scale(1.15)" ><polygon points="-3.48,-1.7 0,0.3 0,3.7 -3.48,1.7" fill="#fbe9d2" stroke="#6a4a2a" stroke-width="0.5" stroke-linejoin="round"/><polygon points="0,0.3 3.48,-1.7 3.48,1.7 0,3.7" fill="#e5dcd2" stroke="#6a4a2a" stroke-width="0.5" stroke-linejoin="round"/><polygon points="0,-3.7 3.48,-1.7 0,0.3 -3.48,-1.7" fill="#f19628" stroke="#6a4a2a" stroke-width="0.5" stroke-linejoin="round"/><path d="M2.5 0 V5.5 M-0.3 2.7 H5.3" fill="none" stroke="#222" stroke-width="1.0" stroke-linecap="round" stroke-linejoin="round" /></g><g transform="translate(276.4,61) scale(1.15)" ><polygon points="-3.48,-1.7 0,0.3 0,3.7 -3.48,1.7" fill="#fbe9d2" stroke="#6a4a2a" stroke-width="0.5" stroke-linejoin="round"/><polygon points="0,0.3 3.48,-1.7 3.48,1.7 0,3.7" fill="#e5dcd2" stroke="#6a4a2a" stroke-width="0.5" stroke-linejoin="round"/><polygon points="0,-3.7 3.48,-1.7 0,0.3 -3.48,-1.7" fill="#f19628" stroke="#6a4a2a" stroke-width="0.5" stroke-linejoin="round"/><polygon points="0,1 4.5,1 4.5,5.5 0,5.5" fill="#ddd" stroke="#333" stroke-width="0.6" stroke-linejoin="round"/><path d="M1 5 L2.3 2 L3.6 5" fill="none" stroke="#333" stroke-width="0.6" stroke-linecap="round" stroke-linejoin="round" /></g><g transform="translate(276.4,75.2) scale(1.15)" ><polygon points="-3.48,-1.7 0,0.3 0,3.7 -3.48,1.7" fill="#fbe9d2" stroke="#6a4a2a" stroke-width="0.5" stroke-linejoin="round"/><polygon points="0,0.3 3.48,-1.7 3.48,1.7 0,3.7" fill="#e5dcd2" stroke="#6a4a2a" stroke-width="0.5" stroke-linejoin="round"/><polygon points="0,-3.7 3.48,-1.7 0,0.3 -3.48,-1.7" fill="#f19628" stroke="#6a4a2a" stroke-width="0.5" stroke-linejoin="round"/><rect x="-0.5" y="0.5" width="5.5" height="5" rx="0" fill="#fff" stroke="#222" stroke-width="0.7"/><path d="M2.2 0.5 V5.5 M-0.5 3 H5" fill="none" stroke="#222" stroke-width="0.7" stroke-linecap="round" stroke-linejoin="round" /></g><g transform="translate(323.5,51.5)" ><path d="M-8 -1 A8 8 0 0 1 7 -4.5 M7 -4.5 L7.5 -8.5 M7 -4.5 L3 -4.8" fill="none" stroke="#8a8f94" stroke-width="1.0" stroke-linecap="round" stroke-linejoin="round" /><path d="M8 1 A8 8 0 0 1 -7 4.5 M-7 4.5 L-7.5 8.5 M-7 4.5 L-3 4.8" fill="none" stroke="#8a8f94" stroke-width="1.0" stroke-linecap="round" stroke-linejoin="round" /></g><g transform="translate(353.4,56)" ><defs><linearGradient id="pg1" x1="0" y1="0" x2="1" y2="1"><stop offset="0" stop-color="#f7b04e"/><stop offset="1" stop-color="#ec7f12"/></linearGradient></defs><polygon points="-9.3,-5 -1,-9.5 9.3,-5 9.3,4.5 1,9.5 -9.3,5" fill="url(#pg1)" stroke="#c9761a" stroke-width="0.6" stroke-linejoin="round"/><polygon points="1,0 9.3,-5 9.3,4.5 1,9.5" fill="#9092b4" stroke="none" stroke-width="0.6" stroke-linejoin="round"/><path d="M-9.3 -5 L1 0 L9.3 -5 M1 0 V9.5" fill="none" stroke="#d98a3a" stroke-width="0.5" stroke-linecap="round" stroke-linejoin="round" /><path d="M-7.5 -2 L-4.5 1" fill="none" stroke="#e2463c" stroke-width="0.8" stroke-linecap="round" stroke-linejoin="round" /></g><g transform="translate(378,54.5)" ><polygon points="-9,0 -3,-8 6,-8.5 9,-4 4,1 5,6 -3,8.5 -8,5" fill="#fbfbfb" stroke="#4a4a4a" stroke-width="0.6" stroke-linejoin="round"/><path d="M-9 0 L0 -2 L6 -8.5 M0 -2 L-3 8.5 M-3 -8 L0 -2 L9 -4 M-8 5 L0 -2 L4 1" fill="none" stroke="#6a6a6a" stroke-width="0.45" stroke-linecap="round" stroke-linejoin="round" /><circle cx="2" cy="3" r="2.2" fill="#fff" stroke="#333" stroke-width="0.7"/><path d="M3.5 2 L9 0.5 M3.5 4 L8 6" fill="none" stroke="#333" stroke-width="0.8" stroke-linecap="round" stroke-linejoin="round" /></g><g transform="translate(398.4,46.5)" ><polygon points="-4,-4 1,-5.5 4,-4 4,4 0,5.5 0,-1.5 -4,-0.5" fill="#a565b8" stroke="#6a3a80" stroke-width="0.5" stroke-linejoin="round"/><polygon points="0,-1.5 4,-4 4,4 0,5.5" fill="#d9a9e4" stroke="none" stroke-width="0.6" stroke-linejoin="round"/></g><g transform="translate(398.4,61)" ><polygon points="-4.5,-2 0,-5 5,-3 2,4.5 -3,3.5" fill="#e3eef2" stroke="#6b8a98" stroke-width="0.6" stroke-linejoin="round"/><path d="M-5 -4.5 L-1.5 0 M-1.5 -4.5 L-5 0" fill="none" stroke="#e0564a" stroke-width="0.8" stroke-linecap="round" stroke-linejoin="round" /><path d="M1 0 L4.5 -3.5" fill="none" stroke="#6b8a98" stroke-width="0.7" stroke-linecap="round" stroke-linejoin="round" /></g><g transform="translate(398.4,75.2)" ><polygon points="-5,4 -1,-3 5,4.5" fill="#d8d4cf" stroke="#555" stroke-width="0.6" stroke-linejoin="round"/><path d="M-6 -4 L-2 -1 M-2 -5.5 L-4.5 -1.5" fill="none" stroke="#444" stroke-width="0.7" stroke-linecap="round" stroke-linejoin="round" /><path d="M0 4.5 V0.5 M0 0.5 L-1.3 2 M0 0.5 L1.3 2" fill="none" stroke="#222" stroke-width="0.7" stroke-linecap="round" stroke-linejoin="round" /></g><g transform="translate(442.5,46.5)" ><polygon points="-5,0 -1,-4.5 5,-3.5 5,1 0,5 -5,3.5" fill="#d9cfc2" stroke="#5a5048" stroke-width="0.6" stroke-linejoin="round"/><polygon points="-2,-1 3,-2.5 3.5,1 -1,3" fill="#9aa4aa" stroke="#5a5048" stroke-width="0.4" stroke-linejoin="round"/><path d="M-2 4 L4 -3" fill="none" stroke="#e8a040" stroke-width="1.0" stroke-linecap="round" stroke-linejoin="round" /></g><g transform="translate(442.5,61)" ><polygon points="-5,-1 -1,-5 5,-3.5 4,1 -4,2" fill="#e8935a" stroke="#7a4a2a" stroke-width="0.5" stroke-linejoin="round"/><ellipse cx="0.5" cy="3" rx="5" ry="2.6" fill="#3a9a3e" stroke="#1e6a24" stroke-width="0.5" /><path d="M-2 3 H3" fill="none" stroke="#fff" stroke-width="0.8" stroke-linecap="round" stroke-linejoin="round" /></g><g transform="translate(442.5,75.2)" ><polygon points="-5.5,1 -1,-4.5 5.5,-2.5 3,4 -3,5" fill="#dfeaf0" stroke="#5b7c8c" stroke-width="0.6" stroke-linejoin="round"/><path d="M-3 2 Q1 -2 4 -1" fill="none" stroke="#6ab04a" stroke-width="0.8" stroke-linecap="round" stroke-linejoin="round" /><path d="M-1 5 L4 0" fill="none" stroke="#e8a040" stroke-width="1.0" stroke-linecap="round" stroke-linejoin="round" /></g><g transform="translate(497.6,51.5)" ><path d="M-9 2 Q-6 -7 -1 -9.5 Q5 -7 9 -8 Q8 0 1 8.5 Q-4 4 -9 2Z" fill="#dff0f7" stroke="#5b7480" stroke-width="0.6"/><path d="M-4 -3.5 Q2 -2 5 -1 M-3 -8 Q-1 0 1 8" fill="none" stroke="#8cc0d8" stroke-width="0.6" stroke-linecap="round" stroke-linejoin="round" /></g><g transform="translate(524,51.5)" ><path d="M-7 7.5 L5.5 -6" fill="none" stroke="#555" stroke-width="2.2" stroke-linecap="round" stroke-linejoin="round" /><path d="M-7 7.5 L5.5 -6" fill="none" stroke="#f4f4f4" stroke-width="1.0" stroke-linecap="round" stroke-linejoin="round" /><path d="M3 -8.5 Q8 -8 8 -3" fill="none" stroke="#555" stroke-width="1.6" stroke-linecap="round" stroke-linejoin="round" /><path d="M7 7.5 L-3 -3" fill="none" stroke="#555" stroke-width="2.2" stroke-linecap="round" stroke-linejoin="round" /><path d="M7 7.5 L-3 -3" fill="none" stroke="#f4f4f4" stroke-width="1.0" stroke-linecap="round" stroke-linejoin="round" /><polygon points="-8,-6 -5,-9 -1.5,-5.5 -4.5,-2.5" fill="#ddd" stroke="#444" stroke-width="0.7" stroke-linejoin="round"/></g><g transform="translate(562.5,56)" ><path d="M9 -9 L-2 4" fill="none" stroke="#6a5a4a" stroke-width="1.2" stroke-linecap="round" stroke-linejoin="round" /><polygon points="-2,2.5 -0.5,4.5 -3,8 -7,9 -5.5,5" fill="#e8b84a" stroke="#8a6a2a" stroke-width="0.5" stroke-linejoin="round"/><path d="M-4 4 L-1.5 6" fill="none" stroke="#7a8fb0" stroke-width="1.2" stroke-linecap="round" stroke-linejoin="round" /></g><g transform="translate(608.5,54.5)" ><polygon points="-6.96,-1.75 0,2.25 0,5.75 -6.96,1.75" fill="#fafafa" stroke="#59636a" stroke-width="0.6" stroke-linejoin="round"/><polygon points="0,2.25 6.96,-1.75 6.96,1.75 0,5.75" fill="#b4bcc2" stroke="#59636a" stroke-width="0.6" stroke-linejoin="round"/><polygon points="0,-5.75 6.96,-1.75 0,2.25 -6.96,-1.75" fill="#f2f2f2" stroke="#59636a" stroke-width="0.6" stroke-linejoin="round"/><path d="M-6.5 -9 V-3 A4 1.8 0 0 0 1.5 -3 V-9Z" fill="#ee8a20"/><ellipse cx="-2.5" cy="-9" rx="4" ry="1.8" fill="#f6a546" stroke="#c76a10" stroke-width="0.4" /><circle cx="4.5" cy="3.5" r="5.3" fill="#e8504a" stroke="#7a3a3a" stroke-width="0.4"/><path d="M4.5 3.5 L4.5 -1.8 A5.3 5.3 0 0 1 9.6 5 Z" fill="#4a9ae0"/><path d="M4.5 3.5 L9.6 5 A5.3 5.3 0 0 1 1 7.5 Z" fill="#4ab85a"/></g><g transform="translate(664,46.8)" ><polygon points="-6,2 4,-4.5 6,-2 -4,4.5" fill="#8a4ab0" stroke="#4a2a6a" stroke-width="0.5" stroke-linejoin="round"/><path d="M-3.5 1 L-2 3 M-0.5 -0.8 L1 1.2 M2.5 -2.8 L4 -0.8" fill="none" stroke="#f3d34a" stroke-width="0.8" stroke-linecap="round" stroke-linejoin="round" /></g><g transform="translate(664,61.3)" ><rect x="-5.5" y="-4" width="11" height="8.5" rx="0" fill="#e88a3a" stroke="#5a5a6a" stroke-width="0.7"/><rect x="-3" y="-2" width="6" height="4.5" rx="0" fill="#fde9b8" stroke="#b86a2a" stroke-width="0.5"/><path d="M0 -1.5 V2" fill="none" stroke="#c03a2a" stroke-width="0.9" stroke-linecap="round" stroke-linejoin="round" /></g><g transform="translate(664,75.5)" ><rect x="-5.5" y="-4.5" width="11" height="9.5" rx="0" fill="#5a6ad0" stroke="#3a3a8a" stroke-width="0.5"/><rect x="-5.5" y="-4.5" width="5.5" height="9.5" rx="0" fill="#e2504a" stroke="none" stroke-width="0.6"/><path d="M-5.5 0 H5.5 M0 -4.5 V5" fill="none" stroke="#f4f4f4" stroke-width="0.6" stroke-linecap="round" stroke-linejoin="round" /><rect x="1.5" y="1.5" width="3" height="2.5" rx="0" fill="#f0a030" stroke="none" stroke-width="0.6"/></g><g transform="translate(709.7,47)" ><polygon points="-5,-1 -2,-4.5 2,-3.5 2,0 -2,2" fill="#e4e4e4" stroke="#444" stroke-width="0.6" stroke-linejoin="round"/><circle cx="-1.5" cy="2.5" r="2.4" fill="#fff" stroke="#333" stroke-width="0.8"/><circle cx="3" cy="2.5" r="2.4" fill="#fff" stroke="#333" stroke-width="0.8"/></g><g transform="translate(709.7,61.3)" ><polygon points="-5,-1 -2,-4.5 2,-3.5 2,0 -2,2" fill="#e4e4e4" stroke="#444" stroke-width="0.6" stroke-linejoin="round"/><circle cx="-1.5" cy="2.5" r="2.4" fill="#fff" stroke="#333" stroke-width="0.8"/><circle cx="3" cy="2.5" r="2.4" fill="#fff" stroke="#333" stroke-width="0.8"/></g><g transform="translate(709.7,75.5)" ><polygon points="-5,-1 -2,-4.5 2,-3.5 2,0 -2,2" fill="#e4e4e4" stroke="#444" stroke-width="0.6" stroke-linejoin="round"/><circle cx="-2" cy="2.5" r="2.6" fill="#bbb" stroke="#333" stroke-width="0.7"/><polygon points="1,0.5 4,0.5 5.5,2 5.5,5.5 1,5.5" fill="#fff" stroke="#333" stroke-width="0.6" stroke-linejoin="round"/></g><g transform="translate(796,47)" ><polygon points="-6,-1 -3,-5 5,-4.5 6.5,-1 4,4.5 -4,4.5" fill="#8ab4d4" stroke="#3a5a7a" stroke-width="0.6" stroke-linejoin="round"/><path d="M-4 0 Q-1 -3 1 0 T6 0" fill="none" stroke="#e8f2fa" stroke-width="1.0" stroke-linecap="round" stroke-linejoin="round" /><circle cx="-1" cy="1.5" r="1.8" fill="#fff" stroke="#3a5a7a" stroke-width="0.6"/><circle cx="2.5" cy="1.5" r="1.8" fill="#fff" stroke="#3a5a7a" stroke-width="0.6"/></g><g transform="translate(796,61.3)" ><path d="M-3 -1.2 H3 M-3 1.4 H3" fill="none" stroke="#555" stroke-width="1.0" stroke-linecap="round" stroke-linejoin="round" /></g><g transform="translate(796,75.5)" ><path d="M-5.5 4.5 Q-2 3 0 -0.5 T5.5 -4.5" fill="none" stroke="#4aa0c8" stroke-width="0.9" stroke-linecap="round" stroke-linejoin="round" /></g><g transform="translate(174,106)" ><path d="M-6 -5 H4 L0.3 -0.5 V5 L-2.3 3.5 V-0.5 Z" fill="none" stroke="#b9bdc1" stroke-width="0.8" stroke-linecap="round" stroke-linejoin="round" /><path d="M3 4 A2.4 2.4 0 1 1 6.5 5.5 M3 4 L2.5 2 M3 4 L5 3.7" fill="none" stroke="#c9cdd0" stroke-width="0.8" stroke-linecap="round" stroke-linejoin="round" /></g><g transform="translate(295.5,107)" ><path d="M-4.2 -3.25 V3.25 A4.2 1.8 0 0 0 4.2 3.25 V-3.25" fill="#ea8620" stroke="#b0600e" stroke-width="0.5"/><ellipse cx="0" cy="-3.25" rx="4.2" ry="1.8" fill="#f6a546" stroke="#b0600e" stroke-width="0.5" /><path d="M-2 -6 A3.5 3.5 0 0 1 5 -6.5 L6 -2" fill="none" stroke="#8ab4cc" stroke-width="1.0" stroke-linecap="round" stroke-linejoin="round" /><path d="M-5.5 -3 L-1 -7.5" fill="none" stroke="#9fc4d8" stroke-width="0.9" stroke-linecap="round" stroke-linejoin="round" /></g><g transform="translate(317,106.5)" ><circle cx="-2" cy="-2.5" r="1.8599999999999999" fill="none" stroke="#c4c8cc" stroke-width="0.8"/><path d="M-5 -2.5 H1 M-2 -5.5 V0.5" fill="none" stroke="#c4c8cc" stroke-width="0.8" stroke-linecap="round" stroke-linejoin="round" /><path d="M-1 3 A2.3 2.3 0 0 1 3.5 1.5 L5.5 3.5 A2.3 2.3 0 0 1 2 6 Z" fill="none" stroke="#cfd3d6" stroke-width="0.8" stroke-linecap="round" stroke-linejoin="round" /></g><g transform="translate(337.2,106.5)" ><path d="M-6.5 -6 H3.5 L0 -1.5 V3 L-3 1.5 V-1.5 Z" fill="none" stroke="#333" stroke-width="0.8" stroke-linecap="round" stroke-linejoin="round" /><rect x="-0.5" y="-1" width="7" height="7.5" rx="0" fill="#f2f2f2" stroke="#333" stroke-width="0.7"/><path d="M1 1 H2 M3 1 H5 M1 3 H2 M3 3 H5 M1 5 H2 M3 5 H5" fill="none" stroke="#444" stroke-width="0.6" stroke-linecap="round" stroke-linejoin="round" /></g><g transform="translate(363.4,106.5)" ><path d="M-6.5 -5 V5 M-6.5 -5 H-5 M-6.5 5 H-5 M0.5 -5 H2 V0" fill="none" stroke="#cfd3d6" stroke-width="0.8" stroke-linecap="round" stroke-linejoin="round" /><circle cx="-2.2" cy="0" r="1.8599999999999999" fill="none" stroke="#c4c8cc" stroke-width="0.8"/><path d="M-5.2 0 H0.7999999999999998 M-2.2 -3 V3" fill="none" stroke="#c4c8cc" stroke-width="0.8" stroke-linecap="round" stroke-linejoin="round" /><path d="M2 4.5 A2 2 0 1 1 5.5 5.5" fill="none" stroke="#cfd3d6" stroke-width="0.8" stroke-linecap="round" stroke-linejoin="round" /></g><g transform="translate(383.5,106)" ><path d="M-7 -3 L-1.5 -6 L6 -3.5 L6 2 L0.5 5 L-7 2.5 Z M-7 -3 L0.5 -0.5 L6 -3.5 M0.5 -0.5 V5" fill="#fdf3e6" stroke="#e8964a" stroke-width="0.8" stroke-linecap="round" stroke-linejoin="round" /><circle cx="4.2" cy="3.8" r="1.984" fill="none" stroke="#222" stroke-width="0.8"/><path d="M1.0 3.8 H7.4 M4.2 0.5999999999999996 V7.0" fill="none" stroke="#222" stroke-width="0.8" stroke-linecap="round" stroke-linejoin="round" /></g><g transform="translate(403.7,106)" ><rect x="-6.5" y="-7" width="9.5" height="9.5" rx="0" fill="#fff" stroke="#c8a684" stroke-width="0.8"/><circle cx="4" cy="3.5" r="2.108" fill="none" stroke="#222" stroke-width="0.8"/><path d="M0.6000000000000001 3.5 H7.4 M4 0.10000000000000009 V6.9" fill="none" stroke="#222" stroke-width="0.8" stroke-linecap="round" stroke-linejoin="round" /></g><g transform="translate(434.5,106.5)" ><polygon points="-7,-3.5 0,-7 7,-3.5 7,3.5 0,7 -7,3.5" fill="#e9eaeb" stroke="#a9adb0" stroke-width="0.6" stroke-linejoin="round"/><polygon points="0,0 7,-3.5 7,3.5 0,7" fill="#d0d2d4" stroke="none" stroke-width="0.6" stroke-linejoin="round"/><path d="M-7 -3.5 L0 0 L7 -3.5 M0 0 V7" fill="none" stroke="#b3b7ba" stroke-width="0.6" stroke-linecap="round" stroke-linejoin="round" /><path d="M0 -7 V-0.5 M-7 3.5 L0 -0.5 L7 3.5" fill="none" stroke="#cfd2d4" stroke-width="0.5" stroke-linecap="round" stroke-linejoin="round" /></g><g transform="translate(454,106.5)" ><polygon points="-7,-3.5 0,-7 7,-3.5 7,3.5 0,7 -7,3.5" fill="#e9eaeb" stroke="#a9adb0" stroke-width="0.6" stroke-linejoin="round"/><polygon points="-3,-1 3,-1 3,5 -3,5" fill="#f2c9a4" stroke="none" stroke-width="0.6" stroke-linejoin="round"/><path d="M-7 -3.5 L0 0 L7 -3.5 M0 0 V7" fill="none" stroke="#b3b7ba" stroke-width="0.6" stroke-linecap="round" stroke-linejoin="round" /><path d="M0 -7 V-0.5 M-7 3.5 L0 -0.5 L7 3.5" fill="none" stroke="#cfd2d4" stroke-width="0.5" stroke-linecap="round" stroke-linejoin="round" /></g><g transform="translate(519,106.5)" ><path d="M-6.5 5 V-6.5 H5.5 M-6.5 -4.3 H5.5 M5.5 -6.5 V-3" fill="none" stroke="#444" stroke-width="0.8" stroke-linecap="round" stroke-linejoin="round" /><rect x="-2.5" y="-2.5" width="8.5" height="8.5" rx="1" fill="#fff" stroke="#333" stroke-width="0.9"/><path d="M-1 4.5 L4.5 -1 M1.5 4.8 L5 1.3" fill="none" stroke="#333" stroke-width="0.9" stroke-linecap="round" stroke-linejoin="round" /></g><g transform="translate(538.5,106.5)" ><path d="M-6.5 -6 H5 V0 M-6.5 -6 V5.5 H-1 M-1 -6 V5.5 M-6.5 0 H1" fill="none" stroke="#444" stroke-width="0.8" stroke-linecap="round" stroke-linejoin="round" /><path d="M1.5 3.5 Q5 0.5 7 3 M7 3 L6.8 0.8 M7 3 L4.8 3.2 M6 5.5 Q3 7.5 1.5 5" fill="none" stroke="#444" stroke-width="0.8" stroke-linecap="round" stroke-linejoin="round" /></g><g transform="translate(559,106.5)" ><path d="M-1.5 1.5 V-7" fill="none" stroke="#d0304a" stroke-width="0.8" stroke-linecap="round" stroke-linejoin="round" /><path d="M-1.5 1.5 L5.5 -3" fill="none" stroke="#2aa0a0" stroke-width="0.8" stroke-linecap="round" stroke-linejoin="round" /><path d="M-1.5 1.5 L5 6" fill="none" stroke="#d0304a" stroke-width="0.7" stroke-linecap="round" stroke-linejoin="round" /><path d="M-1.5 1.5 L-6 -3" fill="none" stroke="#e07080" stroke-width="0.6" stroke-linecap="round" stroke-linejoin="round" /><circle cx="5.5" cy="6.3" r="0.9" fill="#333" stroke="none" stroke-width="0.6"/><path d="M-2.5 -5.5 L-1.5 -7 L-0.5 -5.5" fill="none" stroke="#333" stroke-width="0.6" stroke-linecap="round" stroke-linejoin="round" /><path d="M4.2 -3.6 L5.8 -3.2 L5 -1.8" fill="none" stroke="#333" stroke-width="0.6" stroke-linecap="round" stroke-linejoin="round" /></g><g transform="translate(639.7,106.5)" ><rect x="-8" y="-7.5" width="16" height="15" rx="0" fill="#fbf6ea" stroke="#8a8a86" stroke-width="0.9"/><rect x="-5.5" y="-4.5" width="10" height="7" rx="0" fill="#f3e4c8" stroke="#9a8a6a" stroke-width="0.5"/><circle cx="2" cy="1" r="3" fill="#fff" stroke="#555" stroke-width="0.8"/><path d="M0 3.5 L-3 6.5" fill="none" stroke="#555" stroke-width="1.1" stroke-linecap="round" stroke-linejoin="round" /></g><g transform="translate(670,106.5)" ><rect x="-7" y="-7" width="14" height="14" rx="0" fill="#fff" stroke="#555" stroke-width="0.9"/><polygon points="-6,-6 -2,-6 -6,-2" fill="#666" stroke="none" stroke-width="0.6" stroke-linejoin="round"/><polygon points="6,-6 2,-6 6,-2" fill="#666" stroke="none" stroke-width="0.6" stroke-linejoin="round"/><polygon points="-6,6 -2,6 -6,2" fill="#666" stroke="none" stroke-width="0.6" stroke-linejoin="round"/><polygon points="6,6 2,6 6,2" fill="#666" stroke="none" stroke-width="0.6" stroke-linejoin="round"/><path d="M-5 -5 L-1.5 -1.5 M5 -5 L1.5 -1.5 M-5 5 L-1.5 1.5 M5 5 L1.5 1.5" fill="none" stroke="#666" stroke-width="0.8" stroke-linecap="round" stroke-linejoin="round" /></g><g transform="translate(699.3,106.5)" ><polygon points="-7,2 -2,-6 2,-5 0,0 7,2.5 4,6.5 -4,6" fill="#8e9296" stroke="#4a4d50" stroke-width="0.6" stroke-linejoin="round"/><path d="M-3 2.5 Q0 1 1 -2" fill="none" stroke="#c9ccce" stroke-width="1.0" stroke-linecap="round" stroke-linejoin="round" /><polygon points="-7,2 -4,6 4,6.5 7,2.5 0,4" fill="#6e7276" stroke="none" stroke-width="0.6" stroke-linejoin="round"/></g><g transform="translate(728.6,106.5)" ><polygon points="-7,-3.5 0,-7.5 7,-3.5 7,4 0,7.5 -7,4" fill="#a9adb1" stroke="#50555a" stroke-width="0.6" stroke-linejoin="round"/><polygon points="-7,-3.5 0,-7.5 7,-3.5 0,-0.5" fill="#d4d7da" stroke="#50555a" stroke-width="0.5" stroke-linejoin="round"/><polygon points="0,-0.5 7,-3.5 7,4 0,7.5" fill="#8b9095" stroke="#50555a" stroke-width="0.5" stroke-linejoin="round"/></g><g transform="translate(759,106.5)" ><path d="M-7.5 -3 Q-2 -9 3.5 -3 Q-2 2.5 -7.5 -3Z" fill="#fff" stroke="#444" stroke-width="0.8" stroke-linecap="round" stroke-linejoin="round" /><circle cx="-2" cy="-3.2" r="2.3" fill="#222" stroke="none" stroke-width="0.6"/><rect x="-0.5" y="-1" width="7.5" height="9" rx="0" fill="#f4f4f4" stroke="#444" stroke-width="0.7"/><path d="M1 1.2 H2 M3 1.2 H5.5 M1 3.4 H2 M3 3.4 H5.5 M1 5.6 H2 M3 5.6 H5.5" fill="none" stroke="#444" stroke-width="0.6" stroke-linecap="round" stroke-linejoin="round" /></g><g transform="translate(788.3,106.5)" ><polygon points="-7,-3.5 0,-7 7,-3.5 0,0" fill="#b9bdc0" stroke="#4a4d50" stroke-width="0.6" stroke-linejoin="round"/><path d="M-7 -0.5 L0 3 L7 -0.5 M-7 2.5 L0 6 L4 4" fill="none" stroke="#4a4d50" stroke-width="0.9" stroke-linecap="round" stroke-linejoin="round" /><g transform="translate(3.8,3.8)" ><circle cx="0" cy="0" r="2.3" fill="#fff" stroke="#333" stroke-width="0.9"/><path d="M2.3 0.0 L3.3 0.0M1.63 1.63 L2.33 2.33M0.0 2.3 L0.0 3.3M-1.63 1.63 L-2.33 2.33M-2.3 0.0 L-3.3 0.0M-1.63 -1.63 L-2.33 -2.33M-0.0 -2.3 L-0.0 -3.3M1.63 -1.63 L2.33 -2.33" fill="none" stroke="#333" stroke-width="1.3"/><circle cx="0" cy="0" r="0.8049999999999999" fill="none" stroke="#333" stroke-width="0.6"/></g></g><g transform="translate(818.4,106.5)" ><rect x="-7.5" y="-7.5" width="15" height="15" rx="0" fill="#fff" stroke="#555" stroke-width="0.9"/><path d="M-7.5 -5 H7.5" fill="none" stroke="#555" stroke-width="0.7" stroke-linecap="round" stroke-linejoin="round" /></g><g transform="translate(16.7,130.6)" ><polygon points="-7,0 -2,-5 3,-3 5,3 -2,6.5" fill="#7b8288" stroke="#3a3f44" stroke-width="0.6" stroke-linejoin="round"/><path d="M-6 1 L2 4 M-4 -2.5 L4 0.5 M-2 -5 L-2 6" fill="none" stroke="#c9cdd0" stroke-width="0.5" stroke-linecap="round" stroke-linejoin="round" /><rect x="-1" y="-7" width="8" height="5.5" rx="0" fill="#f4f4f4" stroke="#222" stroke-width="0.8"/><path d="M1.5 -5.3 V-3 M1.5 -5.3 H3 V-4 H1.5 M4.5 -5.3 V-3" fill="none" stroke="#222" stroke-width="0.6" stroke-linecap="round" stroke-linejoin="round" /><path d="M2 2 L6.5 6.5" fill="none" stroke="#333" stroke-width="1.0" stroke-linecap="round" stroke-linejoin="round" /></g><g transform="translate(16.7,150.4)" ><g transform="translate(-3.2,0.5)" ><path d="M-3 -4.25 V4.25 A3 1.3 0 0 0 3 4.25 V-4.25" fill="#3f63c8" stroke="#2a3f8a" stroke-width="0.5"/><ellipse cx="0" cy="-4.25" rx="3" ry="1.3" fill="#9db8ec" stroke="#2a3f8a" stroke-width="0.5" /></g><path d="M0.5 0 H5" fill="none" stroke="#e0503a" stroke-width="0.9" stroke-linecap="round" stroke-linejoin="round" /><path d="M3.5 -1.8 L5.3 0 L3.5 1.8" fill="none" stroke="#e0503a" stroke-width="0.8" stroke-linecap="round" stroke-linejoin="round" /><path d="M5.5 -4.5 A5 5 0 0 1 5.5 4.5" fill="none" stroke="#e8915a" stroke-width="0.8" stroke-linecap="round" stroke-linejoin="round" /></g><g transform="translate(16.7,171.2)" ><polygon points="-7,2 -3,-5 1,-7 6,-2 3,1 -3,5" fill="#8fb7d8" stroke="#3d5a70" stroke-width="0.6" stroke-linejoin="round"/><polygon points="-7,2 -3,5 -3,7.5 -7,4.5" fill="#5f6a72" stroke="#3a3f44" stroke-width="0.4" stroke-linejoin="round"/><polygon points="-1,0 4,0 6.5,2.5 6.5,8 -1,8" fill="#fff" stroke="#222" stroke-width="0.8" stroke-linejoin="round"/><path d="M-6.5 -6.5 L-5 -5 M-3.5 -8 V-6.5" fill="none" stroke="#3d5a70" stroke-width="0.6" stroke-linecap="round" stroke-linejoin="round" /></g><g transform="translate(16.7,190.6)" ><path d="M-5.5 -4.0 V4.0 A5.5 2.3 0 0 0 5.5 4.0 V-4.0" fill="#ece6e9" stroke="#c9b7c0" stroke-width="0.7"/><ellipse cx="0" cy="-4.0" rx="5.5" ry="2.3" fill="#f3eff1" stroke="#c9b7c0" stroke-width="0.7" /><path d="M0 -4 V6 M-5.5 1.5 A5.5 2.3 0 0 0 5.5 1.5" fill="none" stroke="#d4c4cc" stroke-width="0.5" stroke-linecap="round" stroke-linejoin="round" /></g><g transform="translate(16.7,210.8)" ><path d="M-5.5 6.5 L5.5 -6.5" fill="none" stroke="#4aa39a" stroke-width="0.9" stroke-linecap="round" stroke-linejoin="round" /></g><g transform="translate(16.7,229.5)" ><path d="M-5.5 7 Q-5 -4 5.5 -6" fill="none" stroke="#4aa39a" stroke-width="0.9" stroke-linecap="round" stroke-linejoin="round" /></g><g transform="translate(16.7,249.3)" ><circle cx="0" cy="0" r="5.3" fill="#fff" stroke="#5a2a2a" stroke-width="0.9"/><path d="M0 0.5 L3 -3" fill="none" stroke="#c0392b" stroke-width="0.9" stroke-linecap="round" stroke-linejoin="round" /><circle cx="0" cy="0.5" r="0.8" fill="#5a2a2a" stroke="none" stroke-width="0.6"/></g><g transform="translate(16.7,268.5)" ><circle cx="-2.5" cy="-2.5" r="3.6" fill="none" stroke="#5aa7cf" stroke-width="0.8"/><path d="M1.5 0 L5.5 5.5" fill="none" stroke="#4a90c8" stroke-width="0.9" stroke-linecap="round" stroke-linejoin="round" /><path d="M-5 3 L-3 6" fill="none" stroke="#4a90c8" stroke-width="0.8" stroke-linecap="round" stroke-linejoin="round" /></g><g transform="translate(16.7,288.3)" ><path d="M-5.5 5.5 L5.5 -5.5" fill="none" stroke="#2f6f9a" stroke-width="0.9" stroke-linecap="round" stroke-linejoin="round" /><circle cx="-5.5" cy="5.5" r="1.1" fill="#e08a3a" stroke="none" stroke-width="0.6"/><circle cx="5.5" cy="-5.5" r="1.1" fill="#e08a3a" stroke="none" stroke-width="0.6"/></g><g transform="translate(16.7,308)" ><path d="M-5.5 0 H5.5 M0 -6 V6" fill="none" stroke="#5aa7cf" stroke-width="0.9" stroke-linecap="round" stroke-linejoin="round" /></g><g transform="translate(16.7,328)" ><path d="M-6 6 C-2 5 -2 -1 0 -2 S4 -3 6 -6" fill="none" stroke="#2f5f8a" stroke-width="0.9" stroke-linecap="round" stroke-linejoin="round" /><path d="M-6 6 C-4 5.5 -3 3 -2 1" fill="none" stroke="#5aa7cf" stroke-width="0.9" stroke-linecap="round" stroke-linejoin="round" /></g><g transform="translate(16.7,347.7)" ><path d="M5 -7 C7 0 3 5 -2 5" fill="none" stroke="#e9a36a" stroke-width="0.9" stroke-linecap="round" stroke-linejoin="round" /><path d="M-6.5 3.5 C-5 6 -3 5.5 -1.5 5" fill="none" stroke="#6fa8cf" stroke-width="0.9" stroke-linecap="round" stroke-linejoin="round" /></g><g transform="translate(16.7,367.5)" ><path d="M-6 6 C-3 5 -3 0 0 -0.5 S4 -3 6 -6.5" fill="none" stroke="#e9a36a" stroke-width="0.9" stroke-linecap="round" stroke-linejoin="round" /><path d="M-2 0.8 C0 -1 2 -0.5 3.5 -3" fill="none" stroke="#6fa8cf" stroke-width="0.9" stroke-linecap="round" stroke-linejoin="round" /></g><g transform="translate(16.7,388.3)" ><path d="M-4.5 -2.5 H1.5 M0 -4 L1.5 -2.5 L0 -1 M4.5 2.5 H-1.5 M0 1 L-1.5 2.5 L0 4" fill="none" stroke="#5aa7cf" stroke-width="0.8" stroke-linecap="round" stroke-linejoin="round" /><path d="M1 -6 L-1 6" fill="none" stroke="#4a90c8" stroke-width="0.7" stroke-linecap="round" stroke-linejoin="round" /></g><g transform="translate(16.7,407.5)" ><path d="M-5.5 6 V-3 L0 -6.5 L5.5 -3" fill="none" stroke="#d9935a" stroke-width="0.8" stroke-linecap="round" stroke-linejoin="round" /><circle cx="1.5" cy="1.5" r="3.2" fill="none" stroke="#3f7fa8" stroke-width="0.9"/><path d="M-5.5 6 H5" fill="none" stroke="#e9a36a" stroke-width="0.8" stroke-linecap="round" stroke-linejoin="round" /></g><g transform="translate(16.7,428.3)" ><path d="M-6.5 -6.5 H2 V-2.5 H6.5 V6.5 H-6.5 Z" fill="#fff" stroke="#4a9ab8" stroke-width="0.9" stroke-linecap="round" stroke-linejoin="round" /><path d="M-3 -3 H-1 Q1.5 -3 1.5 -0.5 V0.5 H3.5 V3.5 H-3 Z" fill="#fbe8d8" stroke="#e8a878" stroke-width="0.9" stroke-linecap="round" stroke-linejoin="round" /></g><g transform="translate(16.7,447)" ><ellipse cx="0" cy="0" rx="6" ry="4.3" fill="none" stroke="#d9935a" stroke-width="0.9" transform="rotate(-35)"/><ellipse cx="0" cy="0" rx="4.6" ry="5.8" fill="none" stroke="#4a7a9a" stroke-width="0.8" transform="rotate(-35)"/></g><g transform="translate(16.7,466.8)" ><polygon points="-6.5,-1 -2,-4 6,2 2.5,6.5" fill="#f0b98a" stroke="#8a5a3a" stroke-width="0.6" stroke-linejoin="round"/><path d="M-6.5 -4 Q0 -8 5.5 -3" fill="none" stroke="#3f6f9a" stroke-width="1.0" stroke-linecap="round" stroke-linejoin="round" /><path d="M-4 -2.5 Q2 -1 4.5 4" fill="none" stroke="#5aa7cf" stroke-width="0.9" stroke-linecap="round" stroke-linejoin="round" /></g><g transform="translate(16.7,486.6)" ><polygon points="-6,-3 0,-6.5 6,-1 2,6.5 -3,4" fill="#bfe0f0" stroke="#3f7fa8" stroke-width="0.7" stroke-linejoin="round"/><path d="M-3 -1 Q1 -1 3 3" fill="none" stroke="#3f7fa8" stroke-width="0.8" stroke-linecap="round" stroke-linejoin="round" /><path d="M-6 -3 Q-4 1 -3 4" fill="none" stroke="#3f7fa8" stroke-width="0.8" stroke-linecap="round" stroke-linejoin="round" /></g><g transform="translate(16.7,506.4)" ><polygon points="-6.5,2 -1,-6 6.5,-3.5 1.5,6" fill="#aebfc6" stroke="#222" stroke-width="0.8" stroke-linejoin="round"/><path d="M-4 1.5 Q1 -0.5 4.5 -3" fill="none" stroke="#5ab0c8" stroke-width="1.1" stroke-linecap="round" stroke-linejoin="round" /><polygon points="-6.5,2 1.5,6 0,3 -3,1" fill="#5a6a72" stroke="none" stroke-width="0.6" stroke-linejoin="round"/></g><g transform="translate(16.7,525)" ><polygon points="-6,-3 -1,-6 6.5,1 2.5,6.5 -3.5,3" fill="#b9c9e0" stroke="#5a6a9a" stroke-width="0.6" stroke-linejoin="round"/><path d="M-5 -4.5 Q2 -3 5.5 3.5" fill="none" stroke="#d06a9a" stroke-width="1.3" stroke-linecap="round" stroke-linejoin="round" /><path d="M-3 1 Q1 0 3 4" fill="none" stroke="#4a7ab0" stroke-width="0.9" stroke-linecap="round" stroke-linejoin="round" /></g><g transform="translate(16.7,545.6)" ><polygon points="-7,-2 -2,-5.5 7,0 3,6.5 -3,3" fill="#8fc4e0" stroke="#3f6f9a" stroke-width="0.7" stroke-linejoin="round"/><path d="M-4.5 -3.5 Q1 -2 5 3" fill="none" stroke="#e8f4fa" stroke-width="1.0" stroke-linecap="round" stroke-linejoin="round" /><path d="M-3 3 L-5.5 -1" fill="none" stroke="#3f6f9a" stroke-width="0.7" stroke-linecap="round" stroke-linejoin="round" /></g><g transform="translate(16.7,566.5)" ><g transform="translate(-1.5,1.5)" ><path d="M-5 -2.75 V2.75 A5 2.2 0 0 0 5 2.75 V-2.75" fill="#4a5258" stroke="#2a2f33" stroke-width="0.6"/><ellipse cx="0" cy="-2.75" rx="5" ry="2.2" fill="#8a9298" stroke="#2a2f33" stroke-width="0.6" /></g><polygon points="2,-6.5 7,-4 7,1 4.5,-1.5 2,-2" fill="#f0b040" stroke="#a87010" stroke-width="0.5" stroke-linejoin="round"/><path d="M-3 0.5 L-0.5 1.5" fill="none" stroke="#c9cdd0" stroke-width="0.7" stroke-linecap="round" stroke-linejoin="round" /></g><g transform="translate(16.7,585)" ><path d="M0 -7 C-1.5 -3 1.5 3 0 7" fill="none" stroke="#5aa7cf" stroke-width="0.9" stroke-linecap="round" stroke-linejoin="round" /><path d="M-6.5 0.5 C-3 -1.5 3 1.5 6.5 -0.5" fill="none" stroke="#5aa7cf" stroke-width="0.9" stroke-linecap="round" stroke-linejoin="round" /></g><g transform="translate(16.7,606)" ><path d="M-6.5 -6.5 L6.5 6.5" fill="none" stroke="#5aa7cf" stroke-width="0.9" stroke-linecap="round" stroke-linejoin="round" /><path d="M6.5 -6.5 L-6.5 6.5" fill="none" stroke="#4a90b8" stroke-width="0.9" stroke-linecap="round" stroke-linejoin="round" /><path d="M2 -2 L6.5 -6.5" fill="none" stroke="#e9a36a" stroke-width="0.9" stroke-linecap="round" stroke-linejoin="round" /></g><g transform="translate(10.5,621.7)" ><path d="M-4.5 3.5 V0 A4.5 4 0 0 1 4.5 0 V3.5 H1.5 V0.5 A1.5 1.3 0 0 0 -1.5 0.5 V3.5 Z" fill="#7fb8da" stroke="#2f4f6a" stroke-width="0.7" stroke-linecap="round" stroke-linejoin="round" /></g><g transform="translate(24,621.7)" ><polygon points="-4.5,-1 1,-4.5 5,-2.5 3,3.5 -3,4.5" fill="#4a9ad0" stroke="#2f5f8a" stroke-width="0.6" stroke-linejoin="round"/><path d="M-2 -1.5 L0.5 4 M1 -3 L3 2.5" fill="none" stroke="#bfe0f4" stroke-width="0.6" stroke-linecap="round" stroke-linejoin="round" /></g><g transform="translate(10.5,637.3)" ><path d="M-4.5 0 A4.5 4.5 0 0 0 4.5 0 Z" fill="#cfe6f2" stroke="#3f6f8a" stroke-width="0.7" stroke-linecap="round" stroke-linejoin="round" /><path d="M0 -5 V0 M-2 -3 H2" fill="none" stroke="#3f6f8a" stroke-width="0.7" stroke-linecap="round" stroke-linejoin="round" /><path d="M2.5 -4.5 L5 -2" fill="none" stroke="#e9a36a" stroke-width="0.8" stroke-linecap="round" stroke-linejoin="round" /></g><g transform="translate(24,637.3)" ><path d="M-4.5 -4 L4 4.5" fill="none" stroke="#3fae9a" stroke-width="1.3" stroke-linecap="round" stroke-linejoin="round" /><path d="M-4 3 L0 -1" fill="none" stroke="#3fae9a" stroke-width="1.1" stroke-linecap="round" stroke-linejoin="round" /><path d="M1 0 L5 -3.5 M2 1.5 L5.5 0.5" fill="none" stroke="#e8a040" stroke-width="0.9" stroke-linecap="round" stroke-linejoin="round" /></g><g transform="translate(525,130.6)" ><rect x="-4" y="-6.5" width="8" height="11" rx="1" fill="#a9adb1" stroke="#5a5f63" stroke-width="0.6"/><path d="M-4 -4.5 H4 M-4 -2.5 H4 M-4 -0.5 H4 M-4 1.5 H4 M-4 3.5 H4" fill="none" stroke="#6a6f73" stroke-width="0.7" stroke-linecap="round" stroke-linejoin="round" /><polygon points="-4,4.5 4,4.5 2.5,7 -2.5,7" fill="#8b9095" stroke="#5a5f63" stroke-width="0.5" stroke-linejoin="round"/></g><g transform="translate(525,150.4)" ><polygon points="-6.53,-3.0 0,0.75 0,6.75 -6.53,3.0" fill="#b9bdc1" stroke="#4a4f54" stroke-width="0.6" stroke-linejoin="round"/><polygon points="0,0.75 6.53,-3.0 6.53,3.0 0,6.75" fill="#8f9499" stroke="#4a4f54" stroke-width="0.6" stroke-linejoin="round"/><polygon points="0,-6.75 6.53,-3.0 0,0.75 -6.53,-3.0" fill="#e6e8ea" stroke="#4a4f54" stroke-width="0.6" stroke-linejoin="round"/></g><g transform="translate(525,170.6)" ><path d="M-6.3 -3.75 V3.75 A6.3 2.6 0 0 0 6.3 3.75 V-3.75" fill="#b4b8bc" stroke="#5a5f63" stroke-width="0.6"/><ellipse cx="0" cy="-3.75" rx="6.3" ry="2.6" fill="#e2e4e6" stroke="#5a5f63" stroke-width="0.6" /></g><g transform="translate(525,191)" ><path d="M-2.6 -5.5 L-6.3 4.5 A6.3 2.6 0 0 0 6.3 4.5 L2.6 -5.5 Z" fill="#c9ccce" stroke="#5a5f63" stroke-width="0.6"/><ellipse cx="0" cy="-5.5" rx="2.6" ry="1.2" fill="#eceeef" stroke="#5a5f63" stroke-width="0.6" /></g><g transform="translate(525,209.8)" ><defs><radialGradient id="sg" cx="0.38" cy="0.32" r="0.75"><stop offset="0" stop-color="#f0f1f2"/><stop offset="1" stop-color="#9da1a5"/></radialGradient></defs><circle cx="0" cy="0" r="6.7" fill="url(#sg)" stroke="#5a5f63" stroke-width="0.6"/></g><g transform="translate(525,230.2)" ><path d="M-7 2.5 A7 6 0 0 1 7 2.5 A2 2.2 0 0 1 3 2.5 A3 2.6 0 0 0 -3 2.5 A2 2.2 0 0 1 -7 2.5Z" fill="#8b9095" stroke="#3f4448" stroke-width="0.6"/><ellipse cx="-5" cy="2.5" rx="2" ry="2.2" fill="#c9ccce" stroke="#3f4448" stroke-width="0.5" /><ellipse cx="5" cy="2.5" rx="2" ry="2.2" fill="#6a6f73" stroke="#3f4448" stroke-width="0.5" /></g><g transform="translate(525,248.8)" ><polygon points="-6.09,-2.98 0,0.52 0,6.47 -6.09,2.98" fill="#fbe3c4" stroke="#7a5a8a" stroke-width="0.6" stroke-linejoin="round"/><polygon points="0,0.52 6.09,-2.98 6.09,2.98 0,6.47" fill="#d8c8e8" stroke="#7a5a8a" stroke-width="0.6" stroke-linejoin="round"/><polygon points="0,-6.47 6.09,-2.98 0,0.52 -6.09,-2.98" fill="#f28c1e" stroke="#7a5a8a" stroke-width="0.6" stroke-linejoin="round"/></g><g transform="translate(525,268.3)" ><polygon points="-6.09,-2.98 0,0.52 0,6.47 -6.09,2.98" fill="#f7d9b4" stroke="#8a5a2a" stroke-width="0.6" stroke-linejoin="round"/><polygon points="0,0.52 6.09,-2.98 6.09,2.98 0,6.47" fill="#f28c1e" stroke="#8a5a2a" stroke-width="0.6" stroke-linejoin="round"/><polygon points="0,-6.47 6.09,-2.98 0,0.52 -6.09,-2.98" fill="#fbf6f0" stroke="#8a5a2a" stroke-width="0.6" stroke-linejoin="round"/></g><g transform="translate(525,288)" ><polygon points="-6.35,-3.1 0,0.55 0,6.75 -6.35,3.1" fill="#ef8a1c" stroke="#a8560c" stroke-width="0.6" stroke-linejoin="round"/><polygon points="0,0.55 6.35,-3.1 6.35,3.1 0,6.75" fill="#e57a10" stroke="#a8560c" stroke-width="0.6" stroke-linejoin="round"/><polygon points="0,-6.75 6.35,-3.1 0,0.55 -6.35,-3.1" fill="#f7a23c" stroke="#a8560c" stroke-width="0.6" stroke-linejoin="round"/><polygon points="-4,1 0,3 0,6 -4,4" fill="#fbd4a0" stroke="none" stroke-width="0.6" stroke-linejoin="round"/></g><g transform="translate(525,310)" ><g transform="translate(-1,-0.5)" ><polygon points="-5.48,-2.75 0,0.4 0,5.9 -5.48,2.75" fill="#c4c8cc" stroke="#3f4448" stroke-width="0.6" stroke-linejoin="round"/><polygon points="0,0.4 5.48,-2.75 5.48,2.75 0,5.9" fill="#9a9fa4" stroke="#3f4448" stroke-width="0.6" stroke-linejoin="round"/><polygon points="0,-5.9 5.48,-2.75 0,0.4 -5.48,-2.75" fill="#e6e8ea" stroke="#3f4448" stroke-width="0.6" stroke-linejoin="round"/></g><path d="M1 1 L7 7 M1 6.5 L6.5 1 M4 0 V7.5 M0.5 3.8 H7.5" fill="none" stroke="#333" stroke-width="0.6" stroke-linecap="round" stroke-linejoin="round" /></g><g transform="translate(525,329.8)" ><polygon points="-6.5,2 0,-6.5 4,-5 6.5,2.5 0,6.5" fill="#dcdee0" stroke="#3f4448" stroke-width="0.7" stroke-linejoin="round"/><path d="M0 -6.5 Q4 -2 0 6.5" fill="none" stroke="#8b9095" stroke-width="0.6" stroke-linecap="round" stroke-linejoin="round" /><polygon points="4.5,2.1 6.9,6.9 2.1,6.9" fill="#fff" stroke="#222" stroke-width="0.7" stroke-linejoin="round"/></g><g transform="translate(525,349.5)" ><g transform="translate(-1.5,-1)" ><polygon points="-5.48,-2.75 0,0.4 0,5.9 -5.48,2.75" fill="#d4d7da" stroke="#3f4448" stroke-width="0.6" stroke-linejoin="round"/><polygon points="0,0.4 5.48,-2.75 5.48,2.75 0,5.9" fill="#a9adb1" stroke="#3f4448" stroke-width="0.6" stroke-linejoin="round"/><polygon points="0,-5.9 5.48,-2.75 0,0.4 -5.48,-2.75" fill="#eceeef" stroke="#3f4448" stroke-width="0.6" stroke-linejoin="round"/></g><rect x="0.5" y="0.5" width="6" height="7" rx="0" fill="#fff" stroke="#222" stroke-width="0.8"/></g><g transform="translate(525,369)" ><g transform="translate(-1.5,-1.5)" ><polygon points="-5.48,-2.5 0,0.65 0,5.65 -5.48,2.5" fill="#fbe3c4" stroke="#7a4a10" stroke-width="0.6" stroke-linejoin="round"/><polygon points="0,0.65 5.48,-2.5 5.48,2.5 0,5.65" fill="#f6b877" stroke="#7a4a10" stroke-width="0.6" stroke-linejoin="round"/><polygon points="0,-5.65 5.48,-2.5 0,0.65 -5.48,-2.5" fill="#f28c1e" stroke="#7a4a10" stroke-width="0.6" stroke-linejoin="round"/></g><polygon points="3.5,0.3 6.7,6.7 0.3,6.7" fill="#fff" stroke="#333" stroke-width="0.7" stroke-linejoin="round"/></g><g transform="translate(525,388.5)" ><g transform="translate(-1.5,-1.5)" ><polygon points="-5.48,-2.5 0,0.65 0,5.65 -5.48,2.5" fill="#fbe3c4" stroke="#7a4a10" stroke-width="0.6" stroke-linejoin="round"/><polygon points="0,0.65 5.48,-2.5 5.48,2.5 0,5.65" fill="#f6b877" stroke="#7a4a10" stroke-width="0.6" stroke-linejoin="round"/><polygon points="0,-5.65 5.48,-2.5 0,0.65 -5.48,-2.5" fill="#f28c1e" stroke="#7a4a10" stroke-width="0.6" stroke-linejoin="round"/></g><polygon points="3.5,0.3 6.7,6.7 0.3,6.7" fill="#fff" stroke="#333" stroke-width="0.7" stroke-linejoin="round"/></g><g transform="translate(525,409)" ><g transform="translate(-1,-0.5)" ><path d="M-5.8 -3.25 V3.25 A5.8 2.4 0 0 0 5.8 3.25 V-3.25" fill="#f0a030" stroke="#a8701a" stroke-width="0.6"/><ellipse cx="0" cy="-3.25" rx="5.8" ry="2.4" fill="#f3f0ec" stroke="#a8701a" stroke-width="0.6" /></g><polygon points="4,1 7,7 1,7" fill="#f8e0dc" stroke="#c0392b" stroke-width="0.7" stroke-linejoin="round"/></g><g transform="translate(525,428.8)" ><path d="M-6 -6.5 H3.5 L6 -4 V6.5 H-6 Z" fill="#fff" stroke="#5a6068" stroke-width="0.9" stroke-linecap="round" stroke-linejoin="round" /><rect x="-3.5" y="-6.5" width="6" height="4" rx="0" fill="#fff" stroke="#5a6068" stroke-width="0.7"/><rect x="-3.5" y="0" width="7" height="5" rx="0" fill="#fff" stroke="#5a6068" stroke-width="0.7"/><path d="M-2 2 H2 M-2 3.5 H2" fill="none" stroke="#5a6068" stroke-width="0.6" stroke-linecap="round" stroke-linejoin="round" /></g><g transform="translate(525,447.6)" ><rect x="-7.5" y="-7.5" width="15" height="15" rx="0" fill="#f2f2f2" stroke="none" stroke-width="0.6"/><path d="M-4.5 -6.5 H-6.5 V6.5 H-4.5 M4.5 -6.5 H6.5 V6.5 H4.5" fill="none" stroke="#e8964a" stroke-width="0.9" stroke-linecap="round" stroke-linejoin="round" /><path d="M-4.6 0 Q0 -3.9099999999999997 4.6 0 Q0 3.9099999999999997 -4.6 0Z" fill="#fff" stroke="#333" stroke-width="0.7" stroke-linecap="round" stroke-linejoin="round" /><circle cx="0" cy="0" r="1.656" fill="#222" stroke="none" stroke-width="0.6"/></g><g transform="translate(525,468.3)" ><g transform="translate(-2,-3)" ><path d="M-3.6 0 Q0 -3.06 3.6 0 Q0 3.06 -3.6 0Z" fill="#fff" stroke="#555" stroke-width="0.7" stroke-linecap="round" stroke-linejoin="round" /><circle cx="0" cy="0" r="1.296" fill="#222" stroke="none" stroke-width="0.6"/></g><g transform="translate(2.5,3.5)" ><path d="M-3.6 0 Q0 -3.06 3.6 0 Q0 3.06 -3.6 0Z" fill="#fff" stroke="#333" stroke-width="0.7" stroke-linecap="round" stroke-linejoin="round" /><circle cx="0" cy="0" r="1.296" fill="#222" stroke="none" stroke-width="0.6"/></g><path d="M-6.5 6.5 L6.5 -6.5" fill="none" stroke="#222" stroke-width="1.0" stroke-linecap="round" stroke-linejoin="round" /></g><g transform="translate(525,486.5)" ><path d="M0 -7 H-4 V-4 H-1 V-1 H-5 V2 H-2 V5.5" fill="none" stroke="#333" stroke-width="0.9" stroke-linecap="round" stroke-linejoin="round" /><path d="M1 3 A3 3 0 0 1 6.5 2 M6.5 2 L6.5 0 M7 5 A3 3 0 0 1 1.5 6 M1.5 6 L1.5 8" fill="none" stroke="#555" stroke-width="0.9" stroke-linecap="round" stroke-linejoin="round" /></g><g transform="translate(0,0)" ><path d="M549 161 V174 M561 186.5 V254.2 M561 192.6 H565 M561 204.8 H565 M561 217.2 H565 M561 229.4 H565 M561 241.8 H565 M561 254.2 H565 " fill="none" stroke="#bdbdbd" stroke-width="0.6" stroke-linecap="round" stroke-linejoin="round" stroke-dasharray="0.8 0.8"/></g><g transform="translate(549,155.3)" ><path d="M-1.3 0 H1.3 M0 -1.3 V1.3" fill="none" stroke="#333" stroke-width="0.8" stroke-linecap="round" stroke-linejoin="round" /></g><g transform="translate(549,167.8)" ><path d="M-1.3 0 H1.3 M0 -1.3 V1.3" fill="none" stroke="#333" stroke-width="0.8" stroke-linecap="round" stroke-linejoin="round" /></g><g transform="translate(549,180.3)" ><path d="M-1.4 0 H1.4" fill="none" stroke="#333" stroke-width="0.8" stroke-linecap="round" stroke-linejoin="round" /></g><g transform="translate(559.8,155.3)" ><rect x="-4.6" y="-5.3" width="9.4" height="10.6" rx="0" fill="#fff" stroke="#444" stroke-width="0.8"/><path d="M-4.6 -3.2 H4.8" fill="none" stroke="#444" stroke-width="0.6" stroke-linecap="round" stroke-linejoin="round" /><polygon points="-2.5,2.5 0,-1.5 2.5,1 1,3.5" fill="#9aa0a6" stroke="#444" stroke-width="0.4" stroke-linejoin="round"/></g><g transform="translate(559.5,167.8)" ><path d="M-4.0 0.5 L-1.2 3.5 L4.5 -4.0" fill="none" stroke="#3bb24a" stroke-width="1.3" stroke-linecap="round" stroke-linejoin="round" /></g><g transform="translate(569.5,167.8)" ><polygon points="-4,-2 -1,-4.5 4,-3 4,2 0,4.5 -4,3" fill="#e0b070" stroke="#8a5a2a" stroke-width="0.5" stroke-linejoin="round"/><polygon points="-4,-2 0,0 0,4.5 -4,3" fill="#f6e6c8" stroke="#8a5a2a" stroke-width="0.4" stroke-linejoin="round"/><path d="M0 -1 L4 -4" fill="none" stroke="#555" stroke-width="0.7" stroke-linecap="round" stroke-linejoin="round" /></g><g transform="translate(559.5,180.3)" ><defs><radialGradient id="gb" cx="0.35" cy="0.3" r="0.8"><stop offset="0" stop-color="#c8f7b0"/><stop offset="0.5" stop-color="#4fd23c"/><stop offset="1" stop-color="#1f9a1a"/></radialGradient></defs><circle cx="0" cy="0" r="4.4" fill="url(#gb)" stroke="#2a9a24" stroke-width="0.4"/></g><g transform="translate(569.7,180.3)" ><rect x="-4.3" y="-4.6" width="8.6" height="9.2" rx="0" fill="#fff" stroke="#8a6ab0" stroke-width="0.6"/><polygon points="-3,-3 1,-3.5 3.5,0 1,3.5 -2.5,2" fill="#f0963c" stroke="#a8560c" stroke-width="0.4" stroke-linejoin="round"/><circle cx="-2" cy="2" r="1.3" fill="#e23a2a" stroke="none" stroke-width="0.6"/><path d="M-3.5 -1 L2 3" fill="none" stroke="#4a6ad0" stroke-width="0.6" stroke-linecap="round" stroke-linejoin="round" /></g><g transform="translate(571,192.6)" ><g transform="translate(0,0)" ><path d="M-4.4 0 Q0 -3.74 4.4 0 Q0 3.74 -4.4 0Z" fill="#fff" stroke="#555" stroke-width="0.7" stroke-linecap="round" stroke-linejoin="round" /><circle cx="0" cy="0" r="1.584" fill="#222" stroke="none" stroke-width="0.6"/></g><path d="M-5 4.5 L5 -4" fill="none" stroke="#555" stroke-width="0.8" stroke-linecap="round" stroke-linejoin="round" /></g><g transform="translate(581,192.6)" ><path d="M0 -4.5 V1 M0 1 L-4 4 M0 1 L4 4 M-4 4 H4" fill="none" stroke="#e48ab0" stroke-width="0.8" stroke-linecap="round" stroke-linejoin="round" /><circle cx="0" cy="-4.3" r="0.9" fill="#e48ab0" stroke="none" stroke-width="0.6"/></g><g transform="translate(571,204.8)" ><path d="M-5 0 Q0 -4.6 5 0 Q0 4.6 -5 0Z" fill="#fff" stroke="#222" stroke-width="0.8" stroke-linecap="round" stroke-linejoin="round" /><circle cx="0" cy="0" r="2.2" fill="#111" stroke="none" stroke-width="0.6"/></g><g transform="translate(581.2,204.8)" ><circle cx="1.2" cy="1.6" r="3.6" fill="#3f6fdc" stroke="#2a4a9a" stroke-width="0.4"/><ellipse cx="1.2" cy="0.4" rx="3.6" ry="1.6" fill="#7fa4f0" stroke="none" stroke-width="0.6" /><path d="M-4.5 -2 L-2.5 0.5 L0.5 -4.5" fill="none" stroke="#d8262a" stroke-width="1.2" stroke-linecap="round" stroke-linejoin="round" /><path d="M-4.5 -4.8 H-1" fill="none" stroke="#d8262a" stroke-width="0.9" stroke-linecap="round" stroke-linejoin="round" /></g><g transform="translate(571,217.2)" ><g transform="translate(0,0)" ><path d="M-4.4 0 Q0 -3.74 4.4 0 Q0 3.74 -4.4 0Z" fill="#fff" stroke="#555" stroke-width="0.7" stroke-linecap="round" stroke-linejoin="round" /><circle cx="0" cy="0" r="1.584" fill="#222" stroke="none" stroke-width="0.6"/></g><path d="M-5 4.5 L5 -4" fill="none" stroke="#555" stroke-width="0.8" stroke-linecap="round" stroke-linejoin="round" /></g><g transform="translate(581.2,217.2)" ><circle cx="0" cy="0" r="4.4" fill="#e6bc8a" stroke="#c9a06a" stroke-width="0.5"/><path d="M-4 -0.5 Q0 1.5 4 -0.5 M-1 -4 Q1 0 -1 4" fill="none" stroke="#c99a5a" stroke-width="0.6" stroke-linecap="round" stroke-linejoin="round" /></g><g transform="translate(571,229.4)" ><g transform="translate(0,0)" ><path d="M-4.4 0 Q0 -3.74 4.4 0 Q0 3.74 -4.4 0Z" fill="#fff" stroke="#555" stroke-width="0.7" stroke-linecap="round" stroke-linejoin="round" /><circle cx="0" cy="0" r="1.584" fill="#222" stroke="none" stroke-width="0.6"/></g><path d="M-5 4.5 L5 -4" fill="none" stroke="#555" stroke-width="0.8" stroke-linecap="round" stroke-linejoin="round" /></g><g transform="translate(581.2,229.4)" ><polygon points="-4.5,-1 0,-4.5 4.5,-1.5 0,1" fill="#f39a2e" stroke="#b8651a" stroke-width="0.4" stroke-linejoin="round"/><polygon points="-4.5,-1 0,1 4.5,-1.5 4.5,2 0,4.8 -4.5,2.5" fill="#f6d9b0" stroke="#b8651a" stroke-width="0.4" stroke-linejoin="round"/><circle cx="1" cy="2.2" r="2.3" fill="#2a3a8a" stroke="none" stroke-width="0.6"/><path d="M-1 2.2 H3" fill="none" stroke="#fff" stroke-width="0.6" stroke-linecap="round" stroke-linejoin="round" /></g><g transform="translate(571,241.8)" ><path d="M-5 0 Q0 -4.6 5 0 Q0 4.6 -5 0Z" fill="#fff" stroke="#222" stroke-width="0.8" stroke-linecap="round" stroke-linejoin="round" /><circle cx="0" cy="0" r="2.2" fill="#111" stroke="none" stroke-width="0.6"/></g><g transform="translate(581.2,241.8)" ><circle cx="1.2" cy="1.6" r="3.6" fill="#3f6fdc" stroke="#2a4a9a" stroke-width="0.4"/><ellipse cx="1.2" cy="0.4" rx="3.6" ry="1.6" fill="#7fa4f0" stroke="none" stroke-width="0.6" /><path d="M-4.5 -2 L-2.5 0.5 L0.5 -4.5" fill="none" stroke="#d8262a" stroke-width="1.2" stroke-linecap="round" stroke-linejoin="round" /><path d="M-4.5 -4.8 H-1" fill="none" stroke="#d8262a" stroke-width="0.9" stroke-linecap="round" stroke-linejoin="round" /></g><g transform="translate(571,254.2)" ><path d="M-5 0 Q0 -4.6 5 0 Q0 4.6 -5 0Z" fill="#fff" stroke="#222" stroke-width="0.8" stroke-linecap="round" stroke-linejoin="round" /><circle cx="0" cy="0" r="2.2" fill="#111" stroke="none" stroke-width="0.6"/></g><g transform="translate(581.2,254.2)" ><circle cx="1.2" cy="1.6" r="3.6" fill="#3f6fdc" stroke="#2a4a9a" stroke-width="0.4"/><ellipse cx="1.2" cy="0.4" rx="3.6" ry="1.6" fill="#7fa4f0" stroke="none" stroke-width="0.6" /><path d="M-4.5 -2 L-2.5 0.5 L0.5 -4.5" fill="none" stroke="#d8262a" stroke-width="1.2" stroke-linecap="round" stroke-linejoin="round" /><path d="M-4.5 -4.8 H-1" fill="none" stroke="#d8262a" stroke-width="0.9" stroke-linecap="round" stroke-linejoin="round" /></g><g transform="translate(688.6,180.3)" ><path d="M-3.8 0.475 L-1.14 3.3249999999999997 L4.2749999999999995 -3.8" fill="none" stroke="#3bb24a" stroke-width="1.2349999999999999" stroke-linecap="round" stroke-linejoin="round" /></g><g transform="translate(688.6,192.6)" ><path d="M-3.8 0.475 L-1.14 3.3249999999999997 L4.2749999999999995 -3.8" fill="none" stroke="#3bb24a" stroke-width="1.2349999999999999" stroke-linecap="round" stroke-linejoin="round" /></g><g transform="translate(688.6,204.8)" ><path d="M-3.8 0.475 L-1.14 3.3249999999999997 L4.2749999999999995 -3.8" fill="none" stroke="#3bb24a" stroke-width="1.2349999999999999" stroke-linecap="round" stroke-linejoin="round" /></g><g transform="translate(688.6,217.2)" ><path d="M-3.8 0.475 L-1.14 3.3249999999999997 L4.2749999999999995 -3.8" fill="none" stroke="#3bb24a" stroke-width="1.2349999999999999" stroke-linecap="round" stroke-linejoin="round" /></g><g transform="translate(688.6,229.4)" ><path d="M-3.8 0.475 L-1.14 3.3249999999999997 L4.2749999999999995 -3.8" fill="none" stroke="#3bb24a" stroke-width="1.2349999999999999" stroke-linecap="round" stroke-linejoin="round" /></g><g transform="translate(688.6,241.8)" ><path d="M-3.8 0.475 L-1.14 3.3249999999999997 L4.2749999999999995 -3.8" fill="none" stroke="#3bb24a" stroke-width="1.2349999999999999" stroke-linecap="round" stroke-linejoin="round" /></g><g transform="translate(688.6,254.2)" ><path d="M-3.8 0.475 L-1.14 3.3249999999999997 L4.2749999999999995 -3.8" fill="none" stroke="#3bb24a" stroke-width="1.2349999999999999" stroke-linecap="round" stroke-linejoin="round" /></g><g transform="translate(673.5,254.2)" ><rect x="-1.6" y="-4.5" width="3.2" height="3.6" rx="0" fill="none" stroke="#d8701a" stroke-width="0.7"/><rect x="-1.6" y="1" width="3.2" height="3.6" rx="0" fill="none" stroke="#d8701a" stroke-width="0.7"/><path d="M-1.6 -0.2 H1.6" fill="none" stroke="#555" stroke-width="0.6" stroke-linecap="round" stroke-linejoin="round" /></g><g transform="translate(40.5,125.5)" ><polygon points="-4,2.5 -1,-3.5 1.5,-2 0.5,0.5 4,2 2,4 -2.5,4" fill="#9fc6da" stroke="#d8eef8" stroke-width="0.5" stroke-linejoin="round"/></g><g transform="translate(79.7,125.7)" ><path d="M0.5 -3 H-2.5 V3 H2.5 V0.5" fill="none" stroke="#fff" stroke-width="1.1" stroke-linecap="round" stroke-linejoin="round" /><path d="M0 0.5 L3 -2.8 M1.2 -3 H3.2 V-1" fill="none" stroke="#fff" stroke-width="0.9" stroke-linecap="round" stroke-linejoin="round" /></g><g transform="translate(89.5,125.5)" ><path d="M-2.4 -2.4 L2.4 2.4 M2.4 -2.4 L-2.4 2.4" fill="none" stroke="#fff" stroke-width="1.3" stroke-linecap="round" stroke-linejoin="round" /></g><g transform="translate(881,207.20000000000002)" ><rect x="-9" y="-13.9" width="18.4" height="27.8" rx="0" fill="#fff" stroke="none" stroke-width="0.6"/></g><g transform="translate(882.5,125.5)" ><circle cx="0" cy="0" r="3.1" fill="none" stroke="#333" stroke-width="1.0"/><path d="M3.1 0.0 L4.1 0.0M2.19 2.19 L2.9 2.9M0.0 3.1 L0.0 4.1M-2.19 2.19 L-2.9 2.9M-3.1 0.0 L-4.1 0.0M-2.19 -2.19 L-2.9 -2.9M-0.0 -3.1 L-0.0 -4.1M2.19 -2.19 L2.9 -2.9" fill="none" stroke="#333" stroke-width="1.3"/><circle cx="0" cy="0" r="1.085" fill="none" stroke="#333" stroke-width="0.6"/></g><g transform="translate(881,156.7)" ><g transform="translate(1.5,-3)" ><polygon points="-3.13,-1.8 0,0.0 0,3.6 -3.13,1.8" fill="#d4d7da" stroke="#4a4d50" stroke-width="0.6" stroke-linejoin="round"/><polygon points="0,0.0 3.13,-1.8 3.13,1.8 0,3.6" fill="#a9adb1" stroke="#4a4d50" stroke-width="0.6" stroke-linejoin="round"/><polygon points="0,-3.6 3.13,-1.8 0,0.0 -3.13,-1.8" fill="#eceeef" stroke="#4a4d50" stroke-width="0.6" stroke-linejoin="round"/></g><g transform="translate(-1.8,2.5)" ><polygon points="-3.13,-1.8 0,0.0 0,3.6 -3.13,1.8" fill="#d4d7da" stroke="#4a4d50" stroke-width="0.6" stroke-linejoin="round"/><polygon points="0,0.0 3.13,-1.8 3.13,1.8 0,3.6" fill="#a9adb1" stroke="#4a4d50" stroke-width="0.6" stroke-linejoin="round"/><polygon points="0,-3.6 3.13,-1.8 0,0.0 -3.13,-1.8" fill="#eceeef" stroke="#4a4d50" stroke-width="0.6" stroke-linejoin="round"/></g><g transform="translate(-1.8,-1)" ><polygon points="-3.13,-1.8 0,0.0 0,3.6 -3.13,1.8" fill="#d4d7da" stroke="#4a4d50" stroke-width="0.6" stroke-linejoin="round"/><polygon points="0,0.0 3.13,-1.8 3.13,1.8 0,3.6" fill="#a9adb1" stroke="#4a4d50" stroke-width="0.6" stroke-linejoin="round"/><polygon points="0,-3.6 3.13,-1.8 0,0.0 -3.13,-1.8" fill="#eceeef" stroke="#4a4d50" stroke-width="0.6" stroke-linejoin="round"/></g></g><g transform="translate(881,182.2)" ><g transform="translate(-2.5,-1)" ><polygon points="-3.65,-2.1 0,0.0 0,4.2 -3.65,2.1" fill="#fde1bd" stroke="#7a4a10" stroke-width="0.5" stroke-linejoin="round"/><polygon points="0,0.0 3.65,-2.1 3.65,2.1 0,4.2" fill="#f9b35a" stroke="#7a4a10" stroke-width="0.5" stroke-linejoin="round"/><polygon points="0,-4.2 3.65,-2.1 0,0.0 -3.65,-2.1" fill="#f28c1e" stroke="#7a4a10" stroke-width="0.5" stroke-linejoin="round"/></g><g transform="translate(-2.5,3.5)" ><polygon points="-2.96,-1.7 0,0.0 0,3.4 -2.96,1.7" fill="#d4d7da" stroke="#4a4d50" stroke-width="0.5" stroke-linejoin="round"/><polygon points="0,0.0 2.96,-1.7 2.96,1.7 0,3.4" fill="#a9adb1" stroke="#4a4d50" stroke-width="0.5" stroke-linejoin="round"/><polygon points="0,-3.4 2.96,-1.7 0,0.0 -2.96,-1.7" fill="#eceeef" stroke="#4a4d50" stroke-width="0.5" stroke-linejoin="round"/></g><polygon points="1,-1 8,4.5 8,-2 1,4.5" fill="#fff" stroke="#333" stroke-width="0.7" stroke-linejoin="round"/></g><g transform="translate(881,207.8)" ><polygon points="-7,2 -2,-6 2,-5 0,0 7,2.5 4,6.5 -4,6" fill="#a4a8ac" stroke="#4a4d50" stroke-width="0.6" stroke-linejoin="round"/><path d="M-3 2.5 Q0 1 1 -2" fill="none" stroke="#d4d7da" stroke-width="1.0" stroke-linecap="round" stroke-linejoin="round" /><polygon points="-7,2 -4,6 4,6.5 7,2.5 0,4" fill="#84888c" stroke="none" stroke-width="0.6" stroke-linejoin="round"/></g><g transform="translate(881,233.3)" ><polygon points="-7,2 -2,-6 2,-5 0,0 7,2.5 4,6.5 -4,6" fill="#a4a8ac" stroke="#4a4d50" stroke-width="0.6" stroke-linejoin="round"/><path d="M-3 2.5 Q0 1 1 -2" fill="none" stroke="#d4d7da" stroke-width="1.0" stroke-linecap="round" stroke-linejoin="round" /><polygon points="-7,2 -4,6 4,6.5 7,2.5 0,4" fill="#84888c" stroke="none" stroke-width="0.6" stroke-linejoin="round"/><path d="M1 -7 L3 -3 M5.5 -8 L5 -3.5 M8 -5 L6 -2" fill="none" stroke="#f28c1e" stroke-width="1.0" stroke-linecap="round" stroke-linejoin="round" /></g><g transform="translate(881,260)" ><polygon points="-7,0 -1,-5 6,-2 1,6 -6,4" fill="#eceeef" stroke="#4a4d50" stroke-width="0.6" stroke-linejoin="round"/><path d="M-7 -6 L-2 -1 M-7 -2.5 L-3 0.5" fill="none" stroke="#f28c1e" stroke-width="1.0" stroke-linecap="round" stroke-linejoin="round" /><circle cx="4.5" cy="3.5" r="3" fill="#fff" stroke="#333" stroke-width="0.7"/></g><g transform="translate(880,295)" ><circle cx="0" cy="0" r="5.3" fill="#a9a9a9" stroke="#8e8e8e" stroke-width="0.6"/><path d="M0 -2.5 V2.8" fill="none" stroke="#c9c9c9" stroke-width="1.0" stroke-linecap="round" stroke-linejoin="round" /></g><g transform="translate(880,327.5)" ><rect x="-7.5" y="-7.5" width="15" height="15" rx="0" fill="#ececec" stroke="#555" stroke-width="0.9"/><path d="M-7.5 -5.3 H7.5" fill="none" stroke="#555" stroke-width="0.6" stroke-linecap="round" stroke-linejoin="round" /><circle cx="0" cy="1" r="5" fill="#3fa8b8" stroke="#2a7a8a" stroke-width="0.5"/><path d="M-3 -1 Q0 1 -1 4 M1 -3.5 Q3 0 2 3.5" fill="none" stroke="#bfe8ee" stroke-width="0.8" stroke-linecap="round" stroke-linejoin="round" /></g><g transform="translate(880,360)" ><circle cx="0" cy="0" r="6.6" fill="#f6f6f6" stroke="#444" stroke-width="0.8"/><path d="M0 -4.5 V0 H-4" fill="none" stroke="#444" stroke-width="0.8" stroke-linecap="round" stroke-linejoin="round" /></g><g transform="translate(879,386)" ><defs><linearGradient id="rb" x1="0" y1="0" x2="0" y2="1"><stop offset="0" stop-color="#f03a2a"/><stop offset="0.25" stop-color="#f3d32a"/><stop offset="0.55" stop-color="#3ac84a"/><stop offset="0.8" stop-color="#2ab0e0"/><stop offset="1" stop-color="#2a4ad0"/></linearGradient></defs><rect x="-4.5" y="-7" width="5.5" height="14" rx="0" fill="url(#rb)" stroke="none" stroke-width="0.6"/><path d="M2 -3.5 L6 4" fill="none" stroke="#111" stroke-width="1.5" stroke-linecap="round" stroke-linejoin="round" /></g><g transform="translate(880,411)" ><rect x="-5" y="-2" width="4" height="7.5" rx="0" fill="#4a80d0" stroke="#2a4a9a" stroke-width="0.4"/><ellipse cx="-3" cy="-3" rx="2" ry="3" fill="#7aa8e8" stroke="none" stroke-width="0.6" /><path d="M0 0.5 L6 -5 M1 -4 L6 -5 L5 0" fill="none" stroke="#222" stroke-width="1.1" stroke-linecap="round" stroke-linejoin="round" /><path d="M-6 6 H1" fill="none" stroke="#8ab0e0" stroke-width="1.2" stroke-linecap="round" stroke-linejoin="round" /></g><g transform="translate(880,438.8)" ><rect x="-7" y="-6.5" width="14" height="13.5" rx="0" fill="#fff" stroke="#444" stroke-width="0.9"/><path d="M-7 -6.5 L-5 -8.5 H0 L2 -6.5" fill="none" stroke="#444" stroke-width="0.8" stroke-linecap="round" stroke-linejoin="round" /><path d="M-4.5 4.5 L4 -4 M4.5 4.5 L-3.5 -3.5" fill="none" stroke="#444" stroke-width="1.3" stroke-linecap="round" stroke-linejoin="round" /><circle cx="-4" cy="-3.8" r="1.6" fill="none" stroke="#444" stroke-width="0.8"/><path d="M3 -5 L5.5 -2.5" fill="none" stroke="#444" stroke-width="1.4" stroke-linecap="round" stroke-linejoin="round" /></g><g transform="translate(15.6,688.3)" ><polygon points="-6.5,5 4.5,-7 6.5,-5 -4.5,7" fill="#fff" stroke="#5a4a3a" stroke-width="0.8" stroke-linejoin="round"/><path d="M-3 2.5 L-1.8 3.7 M-0.8 0 L0.4 1.2 M1.5 -2.5 L2.7 -1.3" fill="none" stroke="#e8a040" stroke-width="0.8" stroke-linecap="round" stroke-linejoin="round" /></g><g transform="translate(34.7,688.3)" ><rect x="-7" y="-7" width="11.5" height="10.5" rx="0" fill="#fff" stroke="#555" stroke-width="0.8"/><path d="M-7 -4.8 H4.5" fill="none" stroke="#555" stroke-width="0.6" stroke-linecap="round" stroke-linejoin="round" /><path d="M-5 -1.5 H-2 M-3.5 -3 V0 M-0.5 -1.5 H3 M1.2 -3 V0" fill="none" stroke="#e05a3a" stroke-width="0.8" stroke-linecap="round" stroke-linejoin="round" /><polygon points="-1,5.5 5.5,-1.5 7.5,0.5 1,7.5" fill="#fff" stroke="#444" stroke-width="0.8" stroke-linejoin="round"/></g><g transform="translate(56,688.3)" ><rect x="-7" y="-7" width="11.5" height="10.5" rx="0" fill="#fff" stroke="#555" stroke-width="0.8"/><path d="M-7 -4.8 H4.5" fill="none" stroke="#555" stroke-width="0.6" stroke-linecap="round" stroke-linejoin="round" /><path d="M-5 -1.5 H-2 M-3.5 -3 V0 M-0.5 -1.5 H3 M1.2 -3 V0" fill="none" stroke="#e05a3a" stroke-width="0.8" stroke-linecap="round" stroke-linejoin="round" /><path d="M-2.5 7 A5 5 0 0 1 7.5 7 Z" fill="#fff" stroke="#444" stroke-width="0.8" stroke-linecap="round" stroke-linejoin="round" /><path d="M2.5 7 V4" fill="none" stroke="#444" stroke-width="0.7" stroke-linecap="round" stroke-linejoin="round" /></g><g transform="translate(76.5,688.3)" ><polygon points="-7,1 -3,-6 3,-6.5 7,-2 2,1 1,6 -5,5" fill="#f0921e" stroke="#d07a10" stroke-width="0.5" stroke-linejoin="round"/><polygon points="-0.5,-0.5 5,-0.5 7.5,2 7.5,7.5 -0.5,7.5" fill="#fff" stroke="#222" stroke-width="0.8" stroke-linejoin="round"/><path d="M1.5 6 L5.5 2 M5.5 2 H3.2 M5.5 2 V4.3" fill="none" stroke="#222" stroke-width="0.8" stroke-linecap="round" stroke-linejoin="round" /></g><g transform="translate(97,688.3)" ><path d="M-6 -5 H-2 M-4 -7 V-3" fill="none" stroke="#4a9ad0" stroke-width="0.8" stroke-linecap="round" stroke-linejoin="round" /><circle cx="2.5" cy="3" r="4" fill="#fff" stroke="#444" stroke-width="0.8"/><path d="M2.5 1.5 V4.8" fill="none" stroke="#444" stroke-width="0.9" stroke-linecap="round" stroke-linejoin="round" /></g><g transform="translate(117.5,688.3)" ><path d="M-6.5 -6.5 V2 L0 6.5" fill="none" stroke="#e05a7a" stroke-width="0.8" stroke-linecap="round" stroke-linejoin="round" /><path d="M-6.5 2 L-1 -1" fill="none" stroke="#4ab0a0" stroke-width="0.7" stroke-linecap="round" stroke-linejoin="round" /><g transform="translate(2,2)" ><polygon points="-4.35,-1.75 0,0.75 0,4.25 -4.35,1.75" fill="#8e9296" stroke="#3f4448" stroke-width="0.5" stroke-linejoin="round"/><polygon points="0,0.75 4.35,-1.75 4.35,1.75 0,4.25" fill="#6e7276" stroke="#3f4448" stroke-width="0.5" stroke-linejoin="round"/><polygon points="0,-4.25 4.35,-1.75 0,0.75 -4.35,-1.75" fill="#c9ccce" stroke="#3f4448" stroke-width="0.5" stroke-linejoin="round"/></g></g><g transform="translate(137,688.3)" ><path d="M-6.5 -6.5 V2 L0 6.5" fill="none" stroke="#e05a7a" stroke-width="0.8" stroke-linecap="round" stroke-linejoin="round" /><path d="M-6.5 2 L-1 -1" fill="none" stroke="#4ab0a0" stroke-width="0.7" stroke-linecap="round" stroke-linejoin="round" /><path d="M2.5 -2.5 V7 M-2 2.3 H7 M2.5 -2.5 L1.3 -1 M2.5 -2.5 L3.7 -1 M2.5 7 L1.3 5.5 M2.5 7 L3.7 5.5 M-2 2.3 L-0.5 1.1 M-2 2.3 L-0.5 3.5 M7 2.3 L5.5 1.1 M7 2.3 L5.5 3.5" fill="none" stroke="#333" stroke-width="0.8" stroke-linecap="round" stroke-linejoin="round" /></g><g transform="translate(156.6,688.3)" ><path d="M-2 1.5 V-7" fill="none" stroke="#7ab83a" stroke-width="0.9" stroke-linecap="round" stroke-linejoin="round" /><path d="M-2 1.5 L6 -3" fill="none" stroke="#e8b020" stroke-width="0.9" stroke-linecap="round" stroke-linejoin="round" /><path d="M-2 1.5 L5 6.5" fill="none" stroke="#e05a7a" stroke-width="0.9" stroke-linecap="round" stroke-linejoin="round" /><path d="M-2 1.5 L-6 -2" fill="none" stroke="#7ab83a" stroke-width="0.7" stroke-linecap="round" stroke-linejoin="round" /><circle cx="-2" cy="1.5" r="1.1" fill="#e8b020" stroke="none" stroke-width="0.6"/></g><g transform="translate(176.8,688.3)" ><path d="M0 0.5 V-7 M0 0.5 L-6.5 5 M0 0.5 L6.5 5" fill="none" stroke="#e05a7a" stroke-width="0.9" stroke-linecap="round" stroke-linejoin="round" /><circle cx="0" cy="1" r="4.2" fill="none" stroke="#e05a7a" stroke-width="0.8"/><path d="M-1.5 -5.5 L0 -7 L1.5 -5.5" fill="none" stroke="#e05a7a" stroke-width="0.7" stroke-linecap="round" stroke-linejoin="round" /></g><g transform="translate(198,688.3)" ><path d="M-6.5 -6.5 V2 L0 6.5" fill="none" stroke="#e05a7a" stroke-width="0.8" stroke-linecap="round" stroke-linejoin="round" /><path d="M-6.5 2 L-1 -1" fill="none" stroke="#4ab0a0" stroke-width="0.7" stroke-linecap="round" stroke-linejoin="round" /><path d="M-1 -1.5 H5 L7.5 1 V7.5 H-1 Z" fill="#fff" stroke="#444" stroke-width="0.8" stroke-linecap="round" stroke-linejoin="round" /><rect x="0.8" y="-1.5" width="3.8" height="3" rx="0" fill="#fff" stroke="#444" stroke-width="0.6"/><rect x="0.8" y="3.5" width="4.8" height="4" rx="0" fill="#ddd" stroke="#444" stroke-width="0.6"/></g><g transform="translate(218,688.3)" ><path d="M-7 -6.5 V2 L-1 6.5" fill="none" stroke="#e05a7a" stroke-width="0.8" stroke-linecap="round" stroke-linejoin="round" /><path d="M-7 2 L-2 -0.5" fill="none" stroke="#e05a7a" stroke-width="0.7" stroke-linecap="round" stroke-linejoin="round" /><text x="2.5" y="-2.5" font-size="5.5" text-anchor="middle" fill="#222" font-family="Liberation Sans,sans-serif">[000]</text></g><g transform="translate(239.5,688.3)" ><polygon points="-7,-3.5 -1,-7 5,-3.5 -1,0" fill="#c9ccce" stroke="#3f4448" stroke-width="0.6" stroke-linejoin="round"/><path d="M-7 -1 L-1 2.5 L5 -1 M-7 1.5 L-1 5 L5 1.5 M-7 4 L-1 7.5 L2 5.8" fill="none" stroke="#3f4448" stroke-width="0.9" stroke-linecap="round" stroke-linejoin="round" /><polygon points="0.5,0 5,0 7.5,2.5 7.5,8 0.5,8" fill="#fff" stroke="#222" stroke-width="0.8" stroke-linejoin="round"/></g><g transform="translate(259.6,688.3)" ><polygon points="-7,-3.5 -1,-7 5,-3.5 -1,0" fill="#c9ccce" stroke="#3f4448" stroke-width="0.6" stroke-linejoin="round"/><path d="M-7 -1 L-1 2.5 L5 -1 M-7 1.5 L-1 5 L5 1.5 M-7 4 L-1 7.5 L2 5.8" fill="none" stroke="#3f4448" stroke-width="0.9" stroke-linecap="round" stroke-linejoin="round" /><rect x="0.5" y="0" width="7" height="7.5" rx="0" fill="#fff" stroke="#222" stroke-width="0.8"/><path d="M2 6 V2 L5.5 5.5 M2 6 H6" fill="none" stroke="#222" stroke-width="0.7" stroke-linecap="round" stroke-linejoin="round" /></g><g transform="translate(279.7,688.3)" ><polygon points="-7,-3.5 -1,-7 5,-3.5 -1,0" fill="#c9ccce" stroke="#3f4448" stroke-width="0.6" stroke-linejoin="round"/><path d="M-7 -1 L-1 2.5 L5 -1 M-7 1.5 L-1 5 L5 1.5 M-7 4 L-1 7.5 L2 5.8" fill="none" stroke="#3f4448" stroke-width="0.9" stroke-linecap="round" stroke-linejoin="round" /><g transform="translate(4,4)" ><circle cx="0" cy="0" r="2.5" fill="#fff" stroke="#333" stroke-width="0.9"/><path d="M2.5 0.0 L3.5 0.0M1.77 1.77 L2.47 2.47M0.0 2.5 L0.0 3.5M-1.77 1.77 L-2.47 2.47M-2.5 0.0 L-3.5 0.0M-1.77 -1.77 L-2.47 -2.47M-0.0 -2.5 L-0.0 -3.5M1.77 -1.77 L2.47 -2.47" fill="none" stroke="#333" stroke-width="1.3"/><circle cx="0" cy="0" r="0.875" fill="none" stroke="#333" stroke-width="0.6"/></g></g><g transform="translate(298.9,688.3)" ><ellipse cx="0" cy="0" rx="7.3" ry="5.5" fill="#fbf3ea" stroke="#c87a3a" stroke-width="0.8" /><path d="M-7 -0.5 Q0 3 7 -0.5 M-3.5 -5 V5 M3.5 -5 V5" fill="none" stroke="#8a5a3a" stroke-width="0.6" stroke-linecap="round" stroke-linejoin="round" /><ellipse cx="0" cy="-2" rx="3.5" ry="1.8" fill="#f6c48c" stroke="#c87a3a" stroke-width="0.5" /></g><g transform="translate(320,688.3)" ><polygon points="-7.5,0 0,-6 7.5,-2 7.5,2 0,7 -7.5,3.5" fill="#ead9c4" stroke="#9a7a5a" stroke-width="0.6" stroke-linejoin="round"/><polygon points="-4.5,-0.5 0,-4 5,-1.5 0.5,2" fill="#f6a546" stroke="#a8701a" stroke-width="0.5" stroke-linejoin="round"/><path d="M-7.5 0 L0 3.5 L7.5 -2 M0 3.5 V7" fill="none" stroke="#9a7a5a" stroke-width="0.6" stroke-linecap="round" stroke-linejoin="round" /></g><g transform="translate(340.3,688.3)" ><rect x="-8" y="-8" width="16" height="16" rx="0" fill="#fff" stroke="#5a6a7a" stroke-width="0.9"/><rect x="-4" y="-4" width="8" height="8" rx="0" fill="#f28c1e" stroke="#d07a10" stroke-width="0.5"/></g><g transform="translate(361.1,688.3)" ><g transform="translate(-2,-1.5)" ><polygon points="-5.05,-2.25 0,0.65 0,5.15 -5.05,2.25" fill="#eceeef" stroke="#5a4a3a" stroke-width="0.5" stroke-linejoin="round"/><polygon points="0,0.65 5.05,-2.25 5.05,2.25 0,5.15" fill="#c9ccce" stroke="#5a4a3a" stroke-width="0.5" stroke-linejoin="round"/><polygon points="0,-5.15 5.05,-2.25 0,0.65 -5.05,-2.25" fill="#f28c1e" stroke="#5a4a3a" stroke-width="0.5" stroke-linejoin="round"/></g><rect x="0.5" y="-0.5" width="6.5" height="7.5" rx="1" fill="#fff" stroke="#333" stroke-width="0.8"/></g><g transform="translate(381.3,688.3)" ><polygon points="-7.5,3 0,-0.5 7.5,3 0,6.5" fill="#fff" stroke="#444" stroke-width="0.7" stroke-linejoin="round"/><polygon points="-7.5,0 0,-3.5 7.5,0 0,3.5" fill="#f6a546" stroke="#a8560c" stroke-width="0.6" stroke-linejoin="round"/><polygon points="-7.5,-3 0,-6.5 7.5,-3 0,0.5" fill="#f28c1e" stroke="#a8560c" stroke-width="0.6" stroke-linejoin="round"/></g><g transform="translate(401.4,688.3)" ><polygon points="-7.5,-1 -1,-6.5 7.5,-1.5 1,5.5" fill="#f28c1e" stroke="#a8401c" stroke-width="0.7" stroke-linejoin="round"/><polygon points="-4.5,-1 -0.5,-4.3 4.5,-1.3 0.8,2.8" fill="#f0f0ee" stroke="#5a5a5a" stroke-width="0.5" stroke-linejoin="round"/><path d="M-7.5 -1 L-7 1.5 L1 7.5 L1 5.5" fill="none" stroke="#c0502a" stroke-width="0.8" stroke-linecap="round" stroke-linejoin="round" /></g><g transform="translate(421.5,688.3)" ><path d="M-6.5 5 Q-5 -3 -1 -7 L7 -3.5 Q3 0 2 7.5 Z" fill="#f2961e" stroke="#5a4a6a" stroke-width="0.7"/><path d="M-4.5 2.5 Q-3 -2.5 -0.5 -5 L5 -2.8 Q2.5 0 1.5 4.5 Z" fill="#fbf6ee" stroke="none"/></g><g transform="translate(442.7,688.3)" ><polygon points="-7,-2.5 2,-5.5 7.5,3 -1.5,6.5" fill="#f28c1e" stroke="#c06a10" stroke-width="0.5" stroke-linejoin="round"/><polygon points="-4,-1.5 1.5,-3.5 5,2.5 -0.5,4.3" fill="#f6f2ec" stroke="none" stroke-width="0.6" stroke-linejoin="round"/><path d="M-7 -2.5 L-1.5 6.5" fill="none" stroke="#d8d0e0" stroke-width="1.2" stroke-linecap="round" stroke-linejoin="round" /></g><g transform="translate(462.8,688.3)" ><polygon points="-7.5,3.5 -2,-3.5 7,-6.5 2.5,1 5.5,4.5 -3,6.5" fill="#8a9094" stroke="#4a4f54" stroke-width="0.6" stroke-linejoin="round"/><polygon points="-2,2.5 2.5,1 5.5,4.5 -3,6.5" fill="#bfe0f0" stroke="#5a8aa8" stroke-width="0.5" stroke-linejoin="round"/></g><g transform="translate(483,688.3)" ><rect x="-8" y="-8" width="12.5" height="12.5" rx="0" fill="#f2961e" stroke="#d07a10" stroke-width="0.5"/><g transform="translate(3.5,3.5)" ><path d="M0 -4.5 V4.5 M-4.5 0 H4.5 M0 -4.5 L-1.4 -3 M0 -4.5 L1.4 -3 M0 4.5 L-1.4 3 M0 4.5 L1.4 3 M-4.5 0 L-3 -1.4 M-4.5 0 L-3 1.4 M4.5 0 L3 -1.4 M4.5 0 L3 1.4" fill="none" stroke="#222" stroke-width="0.8" stroke-linecap="round" stroke-linejoin="round" /></g><circle cx="3.5" cy="3.5" r="1.6" fill="#fff" stroke="#222" stroke-width="0.6"/></g><g transform="translate(503,689.3)" ><polygon points="-4.0,-2.0 0,0.3 0,4.3 -4.0,2.0" fill="#6a9ae0" stroke="#2a4a9a" stroke-width="0.5" stroke-linejoin="round"/><polygon points="0,0.3 4.0,-2.0 4.0,2.0 0,4.3" fill="#3a6ac8" stroke="#2a4a9a" stroke-width="0.5" stroke-linejoin="round"/><polygon points="0,-4.3 4.0,-2.0 0,0.3 -4.0,-2.0" fill="#bcd4f4" stroke="#2a4a9a" stroke-width="0.5" stroke-linejoin="round"/><path d="M0 -4 V-8.5 M0 -8.5 L-1.2 -7 M0 -8.5 L1.2 -7" fill="none" stroke="#222" stroke-width="0.7" stroke-linecap="round" stroke-linejoin="round" /><path d="M-4 3 L-7.5 5.5 M4 3 L7.5 5.5" fill="none" stroke="#555" stroke-width="0.7" stroke-linecap="round" stroke-linejoin="round" /></g><g transform="translate(524,688.3)" ><polygon points="-7,-4 -2,-7 3,-4 -2,-1" fill="#f4d8d0" stroke="#a86a5a" stroke-width="0.5" stroke-linejoin="round"/><polygon points="-3,0 4,-2.5 7,2 0,5" fill="#c9b49a" stroke="#6a5a4a" stroke-width="0.6" stroke-linejoin="round"/><path d="M-4 -3 L1 1" fill="none" stroke="#8a5a4a" stroke-width="0.8" stroke-linecap="round" stroke-linejoin="round" /><circle cx="-2" cy="6.5" r="1.6" fill="none" stroke="#333" stroke-width="0.7"/><circle cx="3.5" cy="6.5" r="1.6" fill="none" stroke="#333" stroke-width="0.7"/></g><g transform="translate(543.8,688.3)" ><g transform="translate(-2,-1.5)" ><polygon points="-5.05,-2.25 0,0.65 0,5.15 -5.05,2.25" fill="#eceeef" stroke="#5a4a3a" stroke-width="0.5" stroke-linejoin="round"/><polygon points="0,0.65 5.05,-2.25 5.05,2.25 0,5.15" fill="#c9ccce" stroke="#5a4a3a" stroke-width="0.5" stroke-linejoin="round"/><polygon points="0,-5.15 5.05,-2.25 0,0.65 -5.05,-2.25" fill="#f28c1e" stroke="#5a4a3a" stroke-width="0.5" stroke-linejoin="round"/></g><rect x="0.5" y="-1.5" width="6.5" height="8.5" rx="1" fill="#fff" stroke="#5a6a7a" stroke-width="0.8"/></g><g transform="translate(564.4,688.3)" ><polygon points="-7.5,-6 0,-1.5 0,7 -7.5,2.5" fill="#d9dcdf" stroke="#c87a4a" stroke-width="0.7" stroke-linejoin="round"/><polygon points="7.5,-6 0,-1.5 0,7 7.5,2.5" fill="#b9bdc1" stroke="#c87a4a" stroke-width="0.7" stroke-linejoin="round"/><path d="M-5 7.5 L0 2 L5 7.5" fill="none" stroke="#c87a4a" stroke-width="0.7" stroke-linecap="round" stroke-linejoin="round" /></g><g transform="translate(584.5,688.3)" ><polygon points="-6,-3 2,-6 7.5,4 -1,7" fill="#f6dcb8" stroke="#b87a3a" stroke-width="0.7" stroke-linejoin="round"/><path d="M-7.5 -5 Q1 -8 6 -1" fill="none" stroke="#3a7aa0" stroke-width="0.8" stroke-linecap="round" stroke-linejoin="round" /><path d="M-4 -6.5 Q3 -5 7 1" fill="none" stroke="#5aa7cf" stroke-width="0.7" stroke-linecap="round" stroke-linejoin="round" /></g><g transform="translate(605.6,688.3)" ><polygon points="-1,-7.5 -1,6 -6,6" fill="#3a4ab0" stroke="#2a2a6a" stroke-width="0.4" stroke-linejoin="round"/><polygon points="1,-7.5 1,6 6,6" fill="#c03a3a" stroke="#6a1a1a" stroke-width="0.4" stroke-linejoin="round"/><path d="M0 -8.5 V7.5" fill="none" stroke="#222" stroke-width="0.7" stroke-linecap="round" stroke-linejoin="round" /><path d="M-7 7 H7" fill="none" stroke="#9ab0d0" stroke-width="0.8" stroke-linecap="round" stroke-linejoin="round" /></g><g transform="translate(625.8,688.3)" ><polygon points="-6,3 2.5,-6.5 6.5,-3 -2,6.5" fill="#4a5ad8" stroke="#2a2a8a" stroke-width="0.5" stroke-linejoin="round"/><ellipse cx="0.3" cy="0" rx="2.6" ry="1.8" fill="#eef" stroke="#2a2a8a" stroke-width="0.4" transform="rotate(-45)"/><path d="M-8 7.5 L-5.5 5 M5.5 -5.5 L8 -8" fill="none" stroke="#9ab0e0" stroke-width="0.9" stroke-linecap="round" stroke-linejoin="round" /></g><g transform="translate(646,688.3)" ><g transform="translate(-1,-3.5)" ><polygon points="-4.18,-1.5 0,0.9 0,3.9 -4.18,1.5" fill="#fde1bd" stroke="#7a4a10" stroke-width="0.5" stroke-linejoin="round"/><polygon points="0,0.9 4.18,-1.5 4.18,1.5 0,3.9" fill="#f9b35a" stroke="#7a4a10" stroke-width="0.5" stroke-linejoin="round"/><polygon points="0,-3.9 4.18,-1.5 0,0.9 -4.18,-1.5" fill="#f28c1e" stroke="#7a4a10" stroke-width="0.5" stroke-linejoin="round"/></g><circle cx="0.2" cy="2" r="2.5" fill="#fff" stroke="#222" stroke-width="0.7"/><circle cx="5.2" cy="2" r="2.5" fill="#fff" stroke="#222" stroke-width="0.7"/><circle cx="0.2" cy="6.5" r="2.5" fill="#fff" stroke="#222" stroke-width="0.7"/><circle cx="5.2" cy="6.5" r="2.5" fill="#fff" stroke="#222" stroke-width="0.7"/></g><g transform="translate(666,688.3)" ><g transform="translate(-1.5,-1.5)" ><polygon points="-5.22,-2.25 0,0.75 0,5.25 -5.22,2.25" fill="#eceeef" stroke="#5a4a3a" stroke-width="0.5" stroke-linejoin="round"/><polygon points="0,0.75 5.22,-2.25 5.22,2.25 0,5.25" fill="#d9a06a" stroke="#5a4a3a" stroke-width="0.5" stroke-linejoin="round"/><polygon points="0,-5.25 5.22,-2.25 0,0.75 -5.22,-2.25" fill="#f28c1e" stroke="#5a4a3a" stroke-width="0.5" stroke-linejoin="round"/></g><circle cx="3.5" cy="4" r="2.4" fill="#fff" stroke="#333" stroke-width="0.7"/><path d="M5.5 1 L8 -0.5 M5.8 5 L8 6.5" fill="none" stroke="#333" stroke-width="0.7" stroke-linecap="round" stroke-linejoin="round" /></g><g transform="translate(683.8,680.3)" ><g transform="translate(0,-0.5)" ><polygon points="-3.65,-1.25 0,0.85 0,3.35 -3.65,1.25" fill="#eceeef" stroke="#5a4a3a" stroke-width="0.5" stroke-linejoin="round"/><polygon points="0,0.85 3.65,-1.25 3.65,1.25 0,3.35" fill="#d4c4b4" stroke="#5a4a3a" stroke-width="0.5" stroke-linejoin="round"/><polygon points="0,-3.35 3.65,-1.25 0,0.85 -3.65,-1.25" fill="#f28c1e" stroke="#5a4a3a" stroke-width="0.5" stroke-linejoin="round"/></g><path d="M1 3 L3.5 5.5" fill="none" stroke="#3fa0c0" stroke-width="1.0" stroke-linecap="round" stroke-linejoin="round" /></g><g transform="translate(683.8,693.6)" ><path d="M-5 1.5 Q0 -3.5 5 0 L4 2.5 Q0 -0.5 -4 3.5 Z" fill="#dff3fa" stroke="#4ab0d0" stroke-width="0.6" stroke-linecap="round" stroke-linejoin="round" /></g><g transform="translate(698.8,680.3)" ><path d="M-5 1.5 Q0 -3.5 5 0 L4 2.5 Q0 -0.5 -4 3.5 Z" fill="#dff3fa" stroke="#5aa0c0" stroke-width="0.6" stroke-linecap="round" stroke-linejoin="round" /></g><g transform="translate(698.8,693.6)" ><polygon points="-4.5,2 -1,-4 4.5,-2 1.5,4" fill="#cfeaf6" stroke="#3f9ac0" stroke-width="0.7" stroke-linejoin="round"/></g><g transform="translate(714,680.3)" ><polygon points="-4.5,1 -1.5,-4 4.5,-2.5 2,3.8" fill="#f0963c" stroke="#8a5a2a" stroke-width="0.5" stroke-linejoin="round"/><path d="M-1.5 -4 Q-3 1 2 3.8" fill="none" stroke="#fbe3c4" stroke-width="0.8" stroke-linecap="round" stroke-linejoin="round" /></g><g transform="translate(714,693.6)" ><polygon points="-4.5,1 -1.5,-4 4.5,-2.5 2,3.8" fill="#e08a3a" stroke="#8a5a2a" stroke-width="0.5" stroke-linejoin="round"/></g><g transform="translate(729,680.3)" ><polygon points="-4.5,1 -1.5,-4 4.5,-2.5 2,3.8" fill="#f0a050" stroke="#8a5a2a" stroke-width="0.5" stroke-linejoin="round"/></g><g transform="translate(729,693.6)" ><polygon points="-4.5,1 -1.5,-4 4.5,-2.5 2,3.8" fill="#a9adb1" stroke="#6a6f73" stroke-width="0.5" stroke-linejoin="round"/></g><g transform="translate(744,680.3)" ><polygon points="-4.5,2 -1,-4 4.5,-2 1.5,4" fill="#cfeaf6" stroke="#3f9ac0" stroke-width="0.7" stroke-linejoin="round"/></g><g transform="translate(744,693.6)" ><polygon points="-4.5,2 -1,-4 4.5,-2 1.5,4" fill="#9fd4ec" stroke="#3f9ac0" stroke-width="0.7" stroke-linejoin="round"/></g><g transform="translate(759,693.6)" ><circle cx="0" cy="1" r="2.6" fill="#7a6ae0" stroke="#4a3ab0" stroke-width="0.5"/></g><g transform="translate(774,680.3)" ><polygon points="-4.5,1 -1.5,-4 4.5,-2.5 2,3.8" fill="#e08a4a" stroke="#8a5a2a" stroke-width="0.5" stroke-linejoin="round"/></g><g transform="translate(774,693.6)" ><g transform="translate(0,0)" ><polygon points="-3.31,-1.9 0,0.0 0,3.8 -3.31,1.9" fill="#eceeef" stroke="#7a5a3a" stroke-width="0.5" stroke-linejoin="round"/><polygon points="0,0.0 3.31,-1.9 3.31,1.9 0,3.8" fill="#d9a06a" stroke="#7a5a3a" stroke-width="0.5" stroke-linejoin="round"/><polygon points="0,-3.8 3.31,-1.9 0,0.0 -3.31,-1.9" fill="#f6b877" stroke="#7a5a3a" stroke-width="0.5" stroke-linejoin="round"/></g></g><g transform="translate(789,680.3)" ><g transform="translate(0,0)" ><polygon points="-3.31,-1.9 0,0.0 0,3.8 -3.31,1.9" fill="#f6d4a8" stroke="#8a4a10" stroke-width="0.5" stroke-linejoin="round"/><polygon points="0,0.0 3.31,-1.9 3.31,1.9 0,3.8" fill="#e08a3a" stroke="#8a4a10" stroke-width="0.5" stroke-linejoin="round"/><polygon points="0,-3.8 3.31,-1.9 0,0.0 -3.31,-1.9" fill="#f28c1e" stroke="#8a4a10" stroke-width="0.5" stroke-linejoin="round"/></g></g><g transform="translate(789,693.6)" ><path d="M-5 0 A5 3.5 0 0 1 5 0 V2 A5 3.5 0 0 1 -5 2Z" fill="#e8701a" stroke="#a8400c" stroke-width="0.5"/><ellipse cx="0" cy="0" rx="5" ry="3" fill="#f59a4a" stroke="#a8400c" stroke-width="0.4" /></g><g transform="translate(804,680.3)" ><g transform="translate(0,0)" ><polygon points="-3.31,-1.9 0,0.0 0,3.8 -3.31,1.9" fill="#eceeef" stroke="#7a5a3a" stroke-width="0.5" stroke-linejoin="round"/><polygon points="0,0.0 3.31,-1.9 3.31,1.9 0,3.8" fill="#d9a06a" stroke="#7a5a3a" stroke-width="0.5" stroke-linejoin="round"/><polygon points="0,-3.8 3.31,-1.9 0,0.0 -3.31,-1.9" fill="#f6b877" stroke="#7a5a3a" stroke-width="0.5" stroke-linejoin="round"/></g></g><g transform="translate(804,693.6)" ><polygon points="-5,1 1,-3.5 5,-1 -1,3.5" fill="#f3b020" stroke="#8a5a10" stroke-width="0.5" stroke-linejoin="round"/><polygon points="-5,1 -1,3.5 -1,5.5 -5,3" fill="#c03a2a" stroke="none" stroke-width="0.6" stroke-linejoin="round"/><polygon points="-1,3.5 5,-1 5,1 -1,5.5" fill="#7a2a1a" stroke="none" stroke-width="0.6" stroke-linejoin="round"/></g><g transform="translate(819,680.3)" ><rect x="-4" y="-4" width="8" height="8" rx="0" fill="#e9d8f4" stroke="#9a6ac0" stroke-width="0.6"/></g><g transform="translate(819,693.6)" ><rect x="-4.5" y="-4" width="9" height="8.5" rx="0" fill="#fff" stroke="#c02a6a" stroke-width="0.8"/><text x="0" y="2.6" font-size="5.5" font-weight="bold" text-anchor="middle" fill="#d02a3a" font-family="Liberation Sans,sans-serif">kg</text></g><g transform="translate(834,680.3)" ><path d="M-4 -3 H4 V2 H-4 Z" fill="#e8eef2" stroke="#7a8a9a" stroke-width="0.7" stroke-linecap="round" stroke-linejoin="round" /></g><g transform="translate(834,693.6)" ><path d="M-3.5 -2 H3 V4.5 H-3.5 Z M-3.5 -2 L-2 -4 H4.5 V2.5 L3 4.5" fill="#f0f0f0" stroke="#333" stroke-width="0.8" stroke-linecap="round" stroke-linejoin="round" /><circle cx="-0.3" cy="1.3" r="1.5" fill="none" stroke="#333" stroke-width="0.7"/></g><g transform="translate(767,675)" ><path d="M14.88 -1.88 L18.93 -1.63 L18.93 1.63 L14.88 1.88 L13.54 6.46 L16.80 8.87 L15.05 11.60 L11.50 9.63 L7.89 12.76 L9.34 16.54 L6.38 17.90 L4.47 14.32 L-0.26 15.00 L-1.08 18.97 L-4.30 18.51 L-3.98 14.46 L-8.32 12.48 L-11.17 15.37 L-13.63 13.24 L-11.17 10.02 L-13.75 6.00 L-17.71 6.89 L-18.62 3.77 L-14.81 2.39 L-14.81 -2.39 L-18.62 -3.77 L-17.71 -6.89 L-13.75 -6.00 L-11.17 -10.02 L-13.63 -13.24 L-11.17 -15.37 L-8.32 -12.48 L-3.98 -14.46 L-4.30 -18.51 L-1.08 -18.97 L-0.26 -15.00 L4.47 -14.32 L6.38 -17.90 L9.34 -16.54 L7.89 -12.76 L11.50 -9.63 L15.05 -11.60 L16.80 -8.87 L13.54 -6.46 Z M10.2 0 A10.2 10.2 0 1 0 -10.2 0 A10.2 10.2 0 1 0 10.2 0Z" fill="#4f5358" fill-rule="evenodd" opacity="0.92"/><path d="M-4 -6.5 A7 7 0 0 0 -6.5 3" fill="none" stroke="#4f5358" stroke-width="1.6" stroke-linecap="round" stroke-linejoin="round" /><path d="M-16 15 L12 -13" fill="none" stroke="#4f5358" stroke-width="6.4" stroke-linecap="round" stroke-linejoin="round" /><path d="M-16 15 L12 -13" fill="none" stroke="#fff" stroke-width="4.2" stroke-linecap="round" stroke-linejoin="round" /><circle cx="-16.5" cy="15.5" r="4.2" fill="#fff" stroke="#4f5358" stroke-width="1.2"/><circle cx="-16.5" cy="15.5" r="1.6" fill="#4f5358" stroke="none" stroke-width="0.6"/><path d="M9 -17 A6.5 6.5 0 1 0 19 -9 L14.5 -8 L11 -11.5 L12 -16 Z" fill="#fff" stroke="#4f5358" stroke-width="1.2" transform="rotate(8 12 -13)"/></g></svg></body></html>
